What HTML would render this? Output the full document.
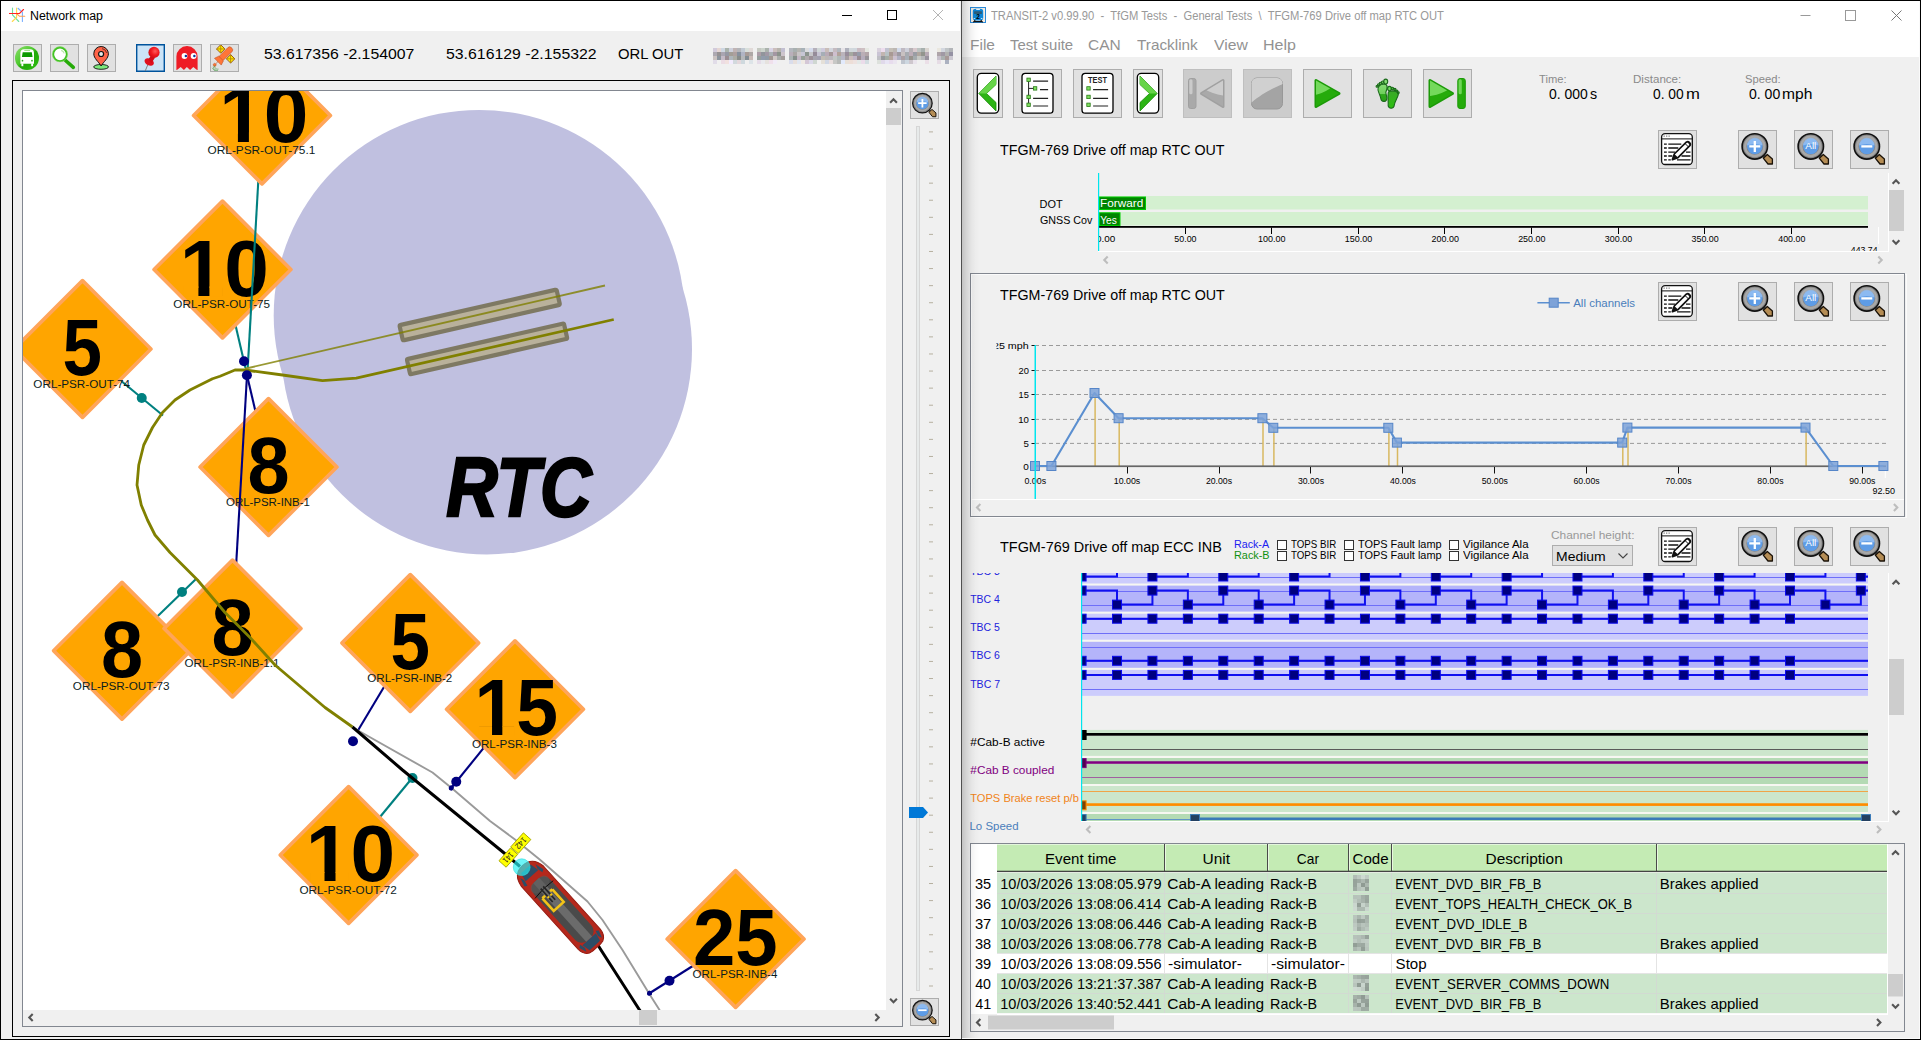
<!DOCTYPE html><html><head><meta charset="utf-8"><title>Network map / TRANSIT-2</title><style>
html,body{margin:0;padding:0}
body{width:1921px;height:1040px;overflow:hidden;background:#f0f0f0;font-family:"Liberation Sans",sans-serif;position:relative}
.abs{position:absolute}
.t{position:absolute;white-space:pre;line-height:0;transform-origin:0 0}
.btn{position:absolute;background:#e1e1e1;border:1px solid #adadad;box-sizing:content-box;overflow:hidden}
.btn.sel{background:#cce4f7;border:1px solid #00539c;box-shadow:inset 0 0 0 0.4px #00539c}
.btn.dis{background:#cccccc;border-color:#bfbfbf}
.btn svg{position:absolute;left:0;top:0}
.box{position:absolute;box-sizing:border-box}
</style></head><body><div id="netmap" class="abs" style="left:0;top:0;width:961px;height:1040px;background:#f0f0f0"><div class="abs" style="left:0;top:0;width:960px;height:31px;background:#fff"></div><svg class="abs" style="left:9px;top:7px" width="17" height="16" viewBox="0 0 17 16" fill="none" stroke-width="1.100" stroke-linecap="round"><path d="M3.500 1V8L9.750 14.500" stroke="#6fe0a0"/><path d="M7.600 1V10.500L3.250 14.500" stroke="#ffd84a"/><path d="M9 1.250L12.500 4.500M13.400 5V14.500" stroke="#7ab0ff"/><path d="M8 7L10.500 9.300H15.750" stroke="#ffa050"/><path d="M0.300 6.500H10.500L14.500 2.500" stroke="#ff2424"/></svg><span class="t" style="left:29.51px;top:15.84px;font-size:12px;color:#000;transform:scaleX(1.0326);">Network map</span><svg class="abs" style="left:830px;top:0" width="130" height="31"><line x1="12" y1="15.500" x2="22" y2="15.500" stroke="#000"/><rect x="57.500" y="10.500" width="9" height="9" fill="none" stroke="#000"/><path d="M103 10l10 10M113 10l-10 10" stroke="#b4b4b4" stroke-width="1"/></svg><div class="btn" style="left:13px;top:44px;width:27px;height:26px"><svg width="27" height="26" viewBox="0 0 27 26"><defs><linearGradient id="gb" x1="0" y1="0" x2="1" y2="1"><stop offset="0" stop-color="#8fe070"/><stop offset="0.45" stop-color="#4cc82c"/><stop offset="0.55" stop-color="#22a80a"/><stop offset="1" stop-color="#2fc010"/></linearGradient></defs><circle cx="13" cy="13" r="12" fill="url(#gb)"/><path d="M6.4 8.3Q6.4 4.3 10 4.3H16.4Q20 4.3 20 8.3V18.8H6.4Z" fill="#fff"/><rect x="7.4" y="18.4" width="1.9" height="2.8" fill="#fff"/><rect x="17.2" y="18.4" width="1.9" height="2.8" fill="#fff"/><path d="M8.7 7.2H17.8L18.6 12H7.9Z" fill="#0a9a00"/><rect x="10.3" y="5.2" width="5.8" height="0.7" fill="#7ad860"/><circle cx="8.5" cy="15.7" r="0.85" fill="#2aa818"/><circle cx="18" cy="15.7" r="0.85" fill="#2aa818"/></svg></div><div class="btn" style="left:50px;top:44px;width:27px;height:26px"><svg width="27" height="26" viewBox="0 0 27 26"><line x1="14" y1="15" x2="22.3" y2="22.3" stroke="#25aa08" stroke-width="3.6" stroke-linecap="round"/><circle cx="9" cy="9.3" r="6.8" fill="#fff" stroke="#3fc020" stroke-width="1.9"/><circle cx="9" cy="9.3" r="7.6" fill="none" stroke="#8fe070" stroke-width="0.5"/><path d="M10.2 5.4a4.300 4.300 0 0 1 3 3" stroke="#b8e8a8" stroke-width="1.1" fill="none"/></svg></div><div class="btn" style="left:87px;top:44px;width:27px;height:26px"><svg width="27" height="26" viewBox="0 0 27 26"><ellipse cx="13.1" cy="21.9" rx="7.4" ry="2.4" fill="#7be87b" stroke="#111" stroke-width="0.9"/><path d="M13.1 21C10.5 16.5 5.8 13.5 5.8 8.800A7.300 7.300 0 0 1 20.4 8.800C20.4 13.5 15.700 16.5 13.1 21Z" fill="#ff6347" stroke="#111" stroke-width="1"/><circle cx="13.1" cy="9" r="2.500" fill="#e8e8e8" stroke="#111" stroke-width="1.200"/><path d="M14 3.600a5.500 5.500 0 0 1 4.600 4.400" stroke="#111" stroke-width="0.600" fill="none"/></svg></div><div class="btn sel" style="left:136px;top:44px;width:27px;height:26px"><svg width="27" height="26" viewBox="0 0 27 26"><defs><radialGradient id="rp" cx="0.6" cy="0.4" r="0.7"><stop offset="0" stop-color="#ff5a5a"/><stop offset="0.500" stop-color="#f01820"/><stop offset="1" stop-color="#c80a14"/></radialGradient></defs><line x1="10.700" y1="20" x2="8.200" y2="26" stroke="#777" stroke-width="0.900"/><ellipse cx="12.200" cy="17" rx="5" ry="3.300" transform="rotate(28 12.200 17)" fill="#e01020"/><path d="M11 14.500L14.300 10.500L18 12.800L14.500 18Z" fill="#d40c1a"/><circle cx="17" cy="7.400" r="5.600" fill="url(#rp)"/></svg></div><div class="btn" style="left:173px;top:44px;width:27px;height:26px"><svg width="27" height="26" viewBox="0 0 27 26"><path d="M2.400 25V11.500A10.600 10.400 0 0 1 23.600 11.500V25L23.050 25L19.300 22.100L16.100 25L12.850 22.100L9.900 25L6.700 22.100L2.900 25Z" fill="#ee1c25"/><ellipse cx="10.500" cy="10.900" rx="2.900" ry="3" fill="#fff"/><ellipse cx="19.600" cy="10.900" rx="2.900" ry="3" fill="#fff"/><circle cx="11.900" cy="10.900" r="1.250" fill="#0a3a9a"/><circle cx="20.400" cy="10.900" r="1.250" fill="#0a3a9a"/></svg></div><div class="btn" style="left:210px;top:44px;width:27px;height:26px"><svg width="27" height="26" viewBox="0 0 27 26"><g transform="translate(14.300 9.250) rotate(-45)"><rect x="-8" y="-2.900" width="17" height="5.800" rx="2.400" fill="#ff7538" stroke="#b84818" stroke-width="0.500"/><path d="M-6 -3.300L-10.500 -4.800V4.800L-6 3.300Z" fill="#ff7538" stroke="#b84818" stroke-width="0.500"/><line x1="-10.500" y1="0" x2="-14" y2="0" stroke="#b84818" stroke-width="0.800" stroke-dasharray="1 0.700"/><circle cx="-15" cy="0" r="1.500" fill="#ff7538" stroke="#b84818" stroke-width="0.400"/><rect x="-2.500" y="-10" width="6" height="6" fill="#ffee00" stroke="#7a2a10" stroke-width="0.700"/><rect x="-2.500" y="4" width="6" height="6" fill="#ffee00" stroke="#7a2a10" stroke-width="0.700"/><path d="M-2.500 -10l6 6M3.500 -10l-6 6M-2.500 4l6 6M3.500 4l-6 6" stroke="#b88a00" stroke-width="0.900"/></g><path d="M2.300 21.500a4.500 4.500 0 0 0 4.700 4M3.600 20.300a3.200 3.200 0 0 0 4 3.800M1.200 22.800a6 6 0 0 0 4.500 3.500" stroke="#4a9a4a" stroke-width="0.600" fill="none"/></svg></div><span class="t" style="left:264.12px;top:53.70px;font-size:15.3px;color:#000;transform:scaleX(1.0338);">53.617356 -2.154007</span><span class="t" style="left:446.37px;top:53.70px;font-size:15.3px;color:#000;transform:scaleX(1.0356);">53.616129 -2.155322</span><span class="t" style="left:617.83px;top:53.70px;font-size:15.3px;color:#000;transform:scaleX(0.9676);">ORL OUT</span><svg class="abs" style="left:0;top:0" width="960" height="80"><rect x="713" y="48" width="4" height="4" fill="rgb(210,203,219)"/><rect x="713" y="52" width="4" height="4" fill="rgb(173,169,177)"/><rect x="713" y="56" width="4" height="4" fill="rgb(202,194,192)"/><rect x="713" y="60" width="4" height="4" fill="rgb(225,220,232)"/><rect x="717" y="48" width="4" height="4" fill="rgb(229,214,211)"/><rect x="717" y="52" width="4" height="4" fill="rgb(150,146,147)"/><rect x="717" y="56" width="4" height="4" fill="rgb(141,149,158)"/><rect x="721" y="48" width="4" height="4" fill="rgb(206,215,226)"/><rect x="721" y="52" width="4" height="4" fill="rgb(169,165,177)"/><rect x="721" y="56" width="4" height="4" fill="rgb(196,187,199)"/><rect x="721" y="60" width="4" height="4" fill="rgb(236,220,228)"/><rect x="725" y="48" width="4" height="4" fill="rgb(170,179,172)"/><rect x="725" y="52" width="4" height="4" fill="rgb(149,152,163)"/><rect x="725" y="56" width="4" height="4" fill="rgb(155,141,147)"/><rect x="725" y="60" width="4" height="4" fill="rgb(241,225,223)"/><rect x="729" y="48" width="4" height="4" fill="rgb(205,208,220)"/><rect x="729" y="52" width="4" height="4" fill="rgb(163,158,150)"/><rect x="729" y="56" width="4" height="4" fill="rgb(174,182,188)"/><rect x="729" y="60" width="4" height="4" fill="rgb(242,235,253)"/><rect x="733" y="48" width="4" height="4" fill="rgb(192,180,180)"/><rect x="733" y="52" width="4" height="4" fill="rgb(174,160,159)"/><rect x="733" y="56" width="4" height="4" fill="rgb(171,172,164)"/><rect x="733" y="60" width="4" height="4" fill="rgb(210,217,221)"/><rect x="737" y="48" width="4" height="4" fill="rgb(180,181,185)"/><rect x="737" y="52" width="4" height="4" fill="rgb(134,144,157)"/><rect x="737" y="56" width="4" height="4" fill="rgb(136,140,138)"/><rect x="737" y="60" width="4" height="4" fill="rgb(228,216,220)"/><rect x="741" y="48" width="4" height="4" fill="rgb(193,201,211)"/><rect x="741" y="52" width="4" height="4" fill="rgb(176,180,196)"/><rect x="741" y="56" width="4" height="4" fill="rgb(181,183,185)"/><rect x="741" y="60" width="4" height="4" fill="rgb(207,217,222)"/><rect x="745" y="48" width="4" height="4" fill="rgb(216,223,219)"/><rect x="745" y="52" width="4" height="4" fill="rgb(167,155,150)"/><rect x="745" y="56" width="4" height="4" fill="rgb(131,140,146)"/><rect x="749" y="48" width="4" height="4" fill="rgb(225,218,216)"/><rect x="749" y="52" width="4" height="4" fill="rgb(174,168,166)"/><rect x="749" y="56" width="4" height="4" fill="rgb(200,186,182)"/><rect x="749" y="60" width="4" height="4" fill="rgb(221,228,232)"/><rect x="757" y="48" width="4" height="4" fill="rgb(197,201,193)"/><rect x="757" y="52" width="4" height="4" fill="rgb(172,157,167)"/><rect x="757" y="56" width="4" height="4" fill="rgb(149,159,157)"/><rect x="757" y="60" width="4" height="4" fill="rgb(229,220,232)"/><rect x="761" y="48" width="4" height="4" fill="rgb(204,211,204)"/><rect x="761" y="52" width="4" height="4" fill="rgb(145,149,155)"/><rect x="761" y="56" width="4" height="4" fill="rgb(146,156,172)"/><rect x="761" y="60" width="4" height="4" fill="rgb(233,234,238)"/><rect x="765" y="48" width="4" height="4" fill="rgb(171,179,173)"/><rect x="765" y="52" width="4" height="4" fill="rgb(161,153,165)"/><rect x="765" y="56" width="4" height="4" fill="rgb(145,155,166)"/><rect x="765" y="60" width="4" height="4" fill="rgb(230,226,222)"/><rect x="769" y="48" width="4" height="4" fill="rgb(217,212,230)"/><rect x="769" y="52" width="4" height="4" fill="rgb(170,176,180)"/><rect x="769" y="56" width="4" height="4" fill="rgb(161,151,147)"/><rect x="769" y="60" width="4" height="4" fill="rgb(240,224,235)"/><rect x="773" y="48" width="4" height="4" fill="rgb(203,190,188)"/><rect x="773" y="52" width="4" height="4" fill="rgb(163,150,162)"/><rect x="773" y="56" width="4" height="4" fill="rgb(207,200,198)"/><rect x="773" y="60" width="4" height="4" fill="rgb(241,236,247)"/><rect x="777" y="48" width="4" height="4" fill="rgb(183,180,173)"/><rect x="777" y="52" width="4" height="4" fill="rgb(139,146,139)"/><rect x="777" y="56" width="4" height="4" fill="rgb(170,172,171)"/><rect x="781" y="48" width="4" height="4" fill="rgb(194,191,209)"/><rect x="781" y="52" width="4" height="4" fill="rgb(206,197,204)"/><rect x="781" y="56" width="4" height="4" fill="rgb(164,158,155)"/><rect x="789" y="48" width="4" height="4" fill="rgb(180,183,190)"/><rect x="789" y="52" width="4" height="4" fill="rgb(185,175,186)"/><rect x="789" y="56" width="4" height="4" fill="rgb(171,179,179)"/><rect x="789" y="60" width="4" height="4" fill="rgb(217,221,236)"/><rect x="793" y="48" width="4" height="4" fill="rgb(168,176,176)"/><rect x="793" y="52" width="4" height="4" fill="rgb(170,166,165)"/><rect x="793" y="56" width="4" height="4" fill="rgb(134,143,140)"/><rect x="793" y="60" width="4" height="4" fill="rgb(232,224,220)"/><rect x="797" y="48" width="4" height="4" fill="rgb(181,180,176)"/><rect x="797" y="52" width="4" height="4" fill="rgb(201,197,199)"/><rect x="797" y="56" width="4" height="4" fill="rgb(195,182,196)"/><rect x="797" y="60" width="4" height="4" fill="rgb(225,231,241)"/><rect x="801" y="48" width="4" height="4" fill="rgb(167,177,184)"/><rect x="801" y="52" width="4" height="4" fill="rgb(199,198,212)"/><rect x="801" y="56" width="4" height="4" fill="rgb(150,159,151)"/><rect x="801" y="60" width="4" height="4" fill="rgb(239,234,228)"/><rect x="805" y="48" width="4" height="4" fill="rgb(220,221,223)"/><rect x="805" y="52" width="4" height="4" fill="rgb(140,148,142)"/><rect x="805" y="56" width="4" height="4" fill="rgb(175,168,171)"/><rect x="805" y="60" width="4" height="4" fill="rgb(212,199,214)"/><rect x="809" y="48" width="4" height="4" fill="rgb(214,220,237)"/><rect x="809" y="52" width="4" height="4" fill="rgb(198,198,201)"/><rect x="809" y="56" width="4" height="4" fill="rgb(156,145,152)"/><rect x="809" y="60" width="4" height="4" fill="rgb(220,217,234)"/><rect x="813" y="48" width="4" height="4" fill="rgb(181,176,186)"/><rect x="813" y="52" width="4" height="4" fill="rgb(149,140,153)"/><rect x="813" y="56" width="4" height="4" fill="rgb(166,164,174)"/><rect x="813" y="60" width="4" height="4" fill="rgb(207,215,209)"/><rect x="817" y="48" width="4" height="4" fill="rgb(208,215,215)"/><rect x="817" y="52" width="4" height="4" fill="rgb(199,196,211)"/><rect x="817" y="56" width="4" height="4" fill="rgb(163,161,176)"/><rect x="821" y="48" width="4" height="4" fill="rgb(207,203,221)"/><rect x="821" y="52" width="4" height="4" fill="rgb(166,174,182)"/><rect x="821" y="56" width="4" height="4" fill="rgb(194,188,180)"/><rect x="821" y="60" width="4" height="4" fill="rgb(229,224,216)"/><rect x="825" y="48" width="4" height="4" fill="rgb(201,189,184)"/><rect x="825" y="52" width="4" height="4" fill="rgb(185,171,182)"/><rect x="825" y="56" width="4" height="4" fill="rgb(187,182,182)"/><rect x="825" y="60" width="4" height="4" fill="rgb(209,215,228)"/><rect x="829" y="48" width="4" height="4" fill="rgb(210,214,222)"/><rect x="829" y="52" width="4" height="4" fill="rgb(164,150,152)"/><rect x="829" y="56" width="4" height="4" fill="rgb(186,182,189)"/><rect x="829" y="60" width="4" height="4" fill="rgb(233,222,222)"/><rect x="833" y="48" width="4" height="4" fill="rgb(197,187,192)"/><rect x="833" y="52" width="4" height="4" fill="rgb(206,191,207)"/><rect x="833" y="56" width="4" height="4" fill="rgb(194,198,196)"/><rect x="833" y="60" width="4" height="4" fill="rgb(199,199,197)"/><rect x="837" y="48" width="4" height="4" fill="rgb(177,183,190)"/><rect x="837" y="52" width="4" height="4" fill="rgb(178,162,155)"/><rect x="837" y="56" width="4" height="4" fill="rgb(177,185,185)"/><rect x="837" y="60" width="4" height="4" fill="rgb(183,185,183)"/><rect x="841" y="48" width="4" height="4" fill="rgb(231,228,232)"/><rect x="841" y="52" width="4" height="4" fill="rgb(186,180,187)"/><rect x="841" y="56" width="4" height="4" fill="rgb(183,183,197)"/><rect x="841" y="60" width="4" height="4" fill="rgb(226,234,252)"/><rect x="845" y="48" width="4" height="4" fill="rgb(175,177,188)"/><rect x="845" y="52" width="4" height="4" fill="rgb(153,142,156)"/><rect x="845" y="56" width="4" height="4" fill="rgb(165,157,160)"/><rect x="845" y="60" width="4" height="4" fill="rgb(232,224,216)"/><rect x="849" y="48" width="4" height="4" fill="rgb(210,216,220)"/><rect x="849" y="52" width="4" height="4" fill="rgb(165,169,161)"/><rect x="849" y="56" width="4" height="4" fill="rgb(205,189,189)"/><rect x="849" y="60" width="4" height="4" fill="rgb(237,222,215)"/><rect x="853" y="48" width="4" height="4" fill="rgb(208,215,221)"/><rect x="853" y="52" width="4" height="4" fill="rgb(156,146,155)"/><rect x="853" y="56" width="4" height="4" fill="rgb(191,181,198)"/><rect x="853" y="60" width="4" height="4" fill="rgb(237,226,224)"/><rect x="857" y="48" width="4" height="4" fill="rgb(203,187,194)"/><rect x="857" y="52" width="4" height="4" fill="rgb(151,156,170)"/><rect x="857" y="56" width="4" height="4" fill="rgb(154,140,147)"/><rect x="857" y="60" width="4" height="4" fill="rgb(227,232,231)"/><rect x="861" y="48" width="4" height="4" fill="rgb(206,192,195)"/><rect x="861" y="52" width="4" height="4" fill="rgb(186,174,182)"/><rect x="861" y="56" width="4" height="4" fill="rgb(181,172,188)"/><rect x="861" y="60" width="4" height="4" fill="rgb(235,220,234)"/><rect x="865" y="48" width="4" height="4" fill="rgb(229,232,226)"/><rect x="865" y="52" width="4" height="4" fill="rgb(179,166,170)"/><rect x="865" y="56" width="4" height="4" fill="rgb(152,148,154)"/><rect x="865" y="60" width="4" height="4" fill="rgb(211,221,225)"/><rect x="877" y="48" width="4" height="4" fill="rgb(218,210,222)"/><rect x="877" y="52" width="4" height="4" fill="rgb(202,196,213)"/><rect x="877" y="56" width="4" height="4" fill="rgb(192,192,198)"/><rect x="877" y="60" width="4" height="4" fill="rgb(221,225,220)"/><rect x="881" y="48" width="4" height="4" fill="rgb(237,221,238)"/><rect x="881" y="52" width="4" height="4" fill="rgb(193,181,176)"/><rect x="881" y="56" width="4" height="4" fill="rgb(150,153,157)"/><rect x="881" y="60" width="4" height="4" fill="rgb(224,217,234)"/><rect x="885" y="48" width="4" height="4" fill="rgb(193,195,209)"/><rect x="885" y="52" width="4" height="4" fill="rgb(184,194,197)"/><rect x="885" y="56" width="4" height="4" fill="rgb(164,172,165)"/><rect x="885" y="60" width="4" height="4" fill="rgb(232,229,245)"/><rect x="889" y="48" width="4" height="4" fill="rgb(197,192,184)"/><rect x="889" y="52" width="4" height="4" fill="rgb(168,153,147)"/><rect x="889" y="56" width="4" height="4" fill="rgb(182,167,160)"/><rect x="889" y="60" width="4" height="4" fill="rgb(231,220,237)"/><rect x="893" y="48" width="4" height="4" fill="rgb(188,183,179)"/><rect x="893" y="52" width="4" height="4" fill="rgb(186,173,181)"/><rect x="893" y="56" width="4" height="4" fill="rgb(204,193,207)"/><rect x="893" y="60" width="4" height="4" fill="rgb(234,229,239)"/><rect x="897" y="48" width="4" height="4" fill="rgb(211,219,235)"/><rect x="897" y="52" width="4" height="4" fill="rgb(158,154,162)"/><rect x="897" y="56" width="4" height="4" fill="rgb(174,175,193)"/><rect x="901" y="48" width="4" height="4" fill="rgb(191,185,193)"/><rect x="901" y="52" width="4" height="4" fill="rgb(200,193,193)"/><rect x="901" y="56" width="4" height="4" fill="rgb(170,159,163)"/><rect x="901" y="60" width="4" height="4" fill="rgb(191,197,206)"/><rect x="905" y="48" width="4" height="4" fill="rgb(206,208,218)"/><rect x="905" y="52" width="4" height="4" fill="rgb(167,171,176)"/><rect x="905" y="56" width="4" height="4" fill="rgb(167,174,182)"/><rect x="905" y="60" width="4" height="4" fill="rgb(205,215,224)"/><rect x="909" y="48" width="4" height="4" fill="rgb(183,177,181)"/><rect x="909" y="52" width="4" height="4" fill="rgb(189,174,184)"/><rect x="909" y="56" width="4" height="4" fill="rgb(152,147,141)"/><rect x="909" y="60" width="4" height="4" fill="rgb(206,199,205)"/><rect x="913" y="48" width="4" height="4" fill="rgb(216,201,205)"/><rect x="913" y="52" width="4" height="4" fill="rgb(154,157,164)"/><rect x="913" y="56" width="4" height="4" fill="rgb(165,171,173)"/><rect x="913" y="60" width="4" height="4" fill="rgb(233,228,236)"/><rect x="917" y="48" width="4" height="4" fill="rgb(188,195,193)"/><rect x="917" y="52" width="4" height="4" fill="rgb(175,166,158)"/><rect x="917" y="56" width="4" height="4" fill="rgb(197,199,195)"/><rect x="921" y="48" width="4" height="4" fill="rgb(167,176,174)"/><rect x="921" y="52" width="4" height="4" fill="rgb(146,149,141)"/><rect x="921" y="56" width="4" height="4" fill="rgb(182,183,185)"/><rect x="925" y="48" width="4" height="4" fill="rgb(219,214,209)"/><rect x="925" y="52" width="4" height="4" fill="rgb(184,171,181)"/><rect x="925" y="56" width="4" height="4" fill="rgb(153,147,158)"/><rect x="925" y="60" width="4" height="4" fill="rgb(235,223,231)"/><rect x="937" y="48" width="4" height="4" fill="rgb(234,231,223)"/><rect x="937" y="52" width="4" height="4" fill="rgb(174,164,169)"/><rect x="937" y="56" width="4" height="4" fill="rgb(198,192,203)"/><rect x="937" y="60" width="4" height="4" fill="rgb(230,220,229)"/><rect x="941" y="48" width="4" height="4" fill="rgb(211,215,223)"/><rect x="941" y="52" width="4" height="4" fill="rgb(160,153,164)"/><rect x="941" y="56" width="4" height="4" fill="rgb(171,177,176)"/><rect x="945" y="48" width="4" height="4" fill="rgb(192,197,199)"/><rect x="945" y="52" width="4" height="4" fill="rgb(178,178,176)"/><rect x="945" y="56" width="4" height="4" fill="rgb(167,153,151)"/><rect x="945" y="60" width="4" height="4" fill="rgb(171,177,192)"/><rect x="949" y="48" width="4" height="4" fill="rgb(178,180,184)"/><rect x="949" y="52" width="4" height="4" fill="rgb(149,146,164)"/><rect x="949" y="56" width="4" height="4" fill="rgb(203,200,209)"/></svg><div class="box" style="left:12px;top:80px;width:938px;height:957px;border:1px solid #000"></div><div class="box" style="left:22px;top:90px;width:881px;height:937px;border:1px solid #828790;background:#f0f0f0"></div><svg class="abs" style="left:23px;top:91px" width="863" height="919" viewBox="23 91 863 919"><rect x="23" y="91" width="863" height="919" fill="#fff"/><circle cx="479.1" cy="315.3" r="205.4" fill="#c0c0e0"/><circle cx="486.7" cy="349.1" r="205.3" fill="#c0c0e0"/><rect x="-80.55" y="-7.80" width="161.10" height="15.60" rx="1.5" transform="translate(479.70,315.00) rotate(-12.8)" fill="#b9b19b" stroke="#7e7963" stroke-width="4.2" stroke-linejoin="round"/><rect x="-80.55" y="-7.80" width="161.10" height="15.60" rx="1.5" transform="translate(487.06,348.94) rotate(-12.8)" fill="#b9b19b" stroke="#7e7963" stroke-width="4.2" stroke-linejoin="round"/><line x1="82.5" y1="349" x2="163" y2="415.5" stroke="#008080" stroke-width="2.1"/><circle cx="141.75" cy="398" r="5" fill="#008080"/><path d="M82.5 280.6L150.9 349L82.5 417.4L14.099999999999994 349Z" fill="#ffa500" stroke="#ffa55a" stroke-width="3.7" stroke-linejoin="round"/><text transform="translate(62.62,375.00) scale(0.8987,1)" font-size="79" fill="#000" font-weight="bold" >5</text><text x="33.35" y="387.80" font-size="11.7" fill="#0c1c1c" >ORL-PSR-OUT-74</text><line x1="222.5" y1="269.5" x2="245.5" y2="368" stroke="#008080" stroke-width="2.1"/><path d="M222.5 201.1L290.9 269.5L222.5 337.9L154.1 269.5Z" fill="#ffa500" stroke="#ffa55a" stroke-width="3.7" stroke-linejoin="round"/><text transform="translate(179.69,295.50) scale(1.0152,1)" font-size="79" fill="#000" font-weight="bold" >10</text><path d="M183.94 286.44H198.41V296.30H183.94ZM209.41 286.44H222.86V296.30H209.41Z" fill="#ffa500"/><text x="173.35" y="308.30" font-size="11.7" fill="#0c1c1c" >ORL-PSR-OUT-75</text><line x1="262" y1="115.5" x2="247.75" y2="367.5" stroke="#008080" stroke-width="2.1"/><path d="M262 47.099999999999994L330.4 115.5L262 183.9L193.6 115.5Z" fill="#ffa500" stroke="#ffa55a" stroke-width="3.7" stroke-linejoin="round"/><text transform="translate(219.19,141.50) scale(1.0152,1)" font-size="79" fill="#000" font-weight="bold" >10</text><path d="M223.44 132.44H237.91V142.30H223.44ZM248.91 132.44H262.36V142.30H248.91Z" fill="#ffa500"/><text transform="translate(207.59,154.30) scale(1.0115,1)" font-size="11.7" fill="#0c1c1c" >ORL-PSR-OUT-75.1</text><line x1="268.5" y1="467" x2="247" y2="375.25" stroke="#000080" stroke-width="2.1"/><path d="M268.5 398.6L336.9 467L268.5 535.4L200.1 467Z" fill="#ffa500" stroke="#ffa55a" stroke-width="3.7" stroke-linejoin="round"/><text transform="translate(247.48,493.00) scale(0.9590,1)" font-size="79" fill="#000" font-weight="bold" >8</text><text transform="translate(225.98,505.80) scale(0.9792,1)" font-size="11.7" fill="#0c1c1c" >ORL-PSR-INB-1</text><line x1="122" y1="650.75" x2="196.25" y2="578.75" stroke="#008080" stroke-width="2.1"/><circle cx="182" cy="592" r="5" fill="#008080"/><path d="M122 582.35L190.4 650.75L122 719.15L53.599999999999994 650.75Z" fill="#ffa500" stroke="#ffa55a" stroke-width="3.7" stroke-linejoin="round"/><text transform="translate(100.98,676.75) scale(0.9590,1)" font-size="79" fill="#000" font-weight="bold" >8</text><text x="72.85" y="689.55" font-size="11.7" fill="#0c1c1c" >ORL-PSR-OUT-73</text><line x1="232.5" y1="628.5" x2="247" y2="375.25" stroke="#000080" stroke-width="2.1"/><path d="M232.5 560.1L300.9 628.5L232.5 696.9L164.1 628.5Z" fill="#ffa500" stroke="#ffa55a" stroke-width="3.7" stroke-linejoin="round"/><text transform="translate(211.48,654.50) scale(0.9590,1)" font-size="79" fill="#000" font-weight="bold" >8</text><text transform="translate(184.48,667.30) scale(0.9943,1)" font-size="11.7" fill="#0c1c1c" >ORL-PSR-INB-1.1</text><line x1="410.3" y1="643" x2="357.5" y2="731.25" stroke="#000080" stroke-width="2.1"/><circle cx="353" cy="741.25" r="5" fill="#000080"/><path d="M410.3 574.6L478.70000000000005 643L410.3 711.4L341.9 643Z" fill="#ffa500" stroke="#ffa55a" stroke-width="3.7" stroke-linejoin="round"/><text transform="translate(390.42,669.00) scale(0.8987,1)" font-size="79" fill="#000" font-weight="bold" >5</text><text transform="translate(367.28,681.80) scale(0.9916,1)" font-size="11.7" fill="#0c1c1c" >ORL-PSR-INB-2</text><line x1="515" y1="709.25" x2="451.25" y2="788" stroke="#000080" stroke-width="2.1"/><circle cx="456.25" cy="781.75" r="5" fill="#000080"/><circle cx="451.25" cy="788" r="2.5" fill="#000080"/><path d="M515 640.85L583.4 709.25L515 777.65L446.6 709.25Z" fill="#ffa500" stroke="#ffa55a" stroke-width="3.7" stroke-linejoin="round"/><text transform="translate(474.49,735.25) scale(0.9509,1)" font-size="79" fill="#000" font-weight="bold" >15</text><path d="M478.42 726.19H492.03V736.05H478.42ZM502.33 726.19H514.98V736.05H502.33Z" fill="#ffa500"/><text transform="translate(471.98,748.05) scale(0.9903,1)" font-size="11.7" fill="#0c1c1c" >ORL-PSR-INB-3</text><line x1="348.6" y1="855" x2="413" y2="777" stroke="#008080" stroke-width="2.1"/><circle cx="412.5" cy="778" r="5" fill="#008080"/><path d="M348.6 786.6L417.0 855L348.6 923.4L280.20000000000005 855Z" fill="#ffa500" stroke="#ffa55a" stroke-width="3.7" stroke-linejoin="round"/><text transform="translate(305.79,881.00) scale(1.0152,1)" font-size="79" fill="#000" font-weight="bold" >10</text><path d="M310.04 871.94H324.51V881.80H310.04ZM335.51 871.94H348.96V881.80H335.51Z" fill="#ffa500"/><text transform="translate(299.45,893.80) scale(1.0051,1)" font-size="11.7" fill="#0c1c1c" >ORL-PSR-OUT-72</text><line x1="735.6" y1="939" x2="649.5" y2="993.25" stroke="#000080" stroke-width="2.1"/><circle cx="669.5" cy="980.75" r="5" fill="#000080"/><circle cx="649.5" cy="993.25" r="2.5" fill="#000080"/><path d="M735.6 870.6L804.0 939L735.6 1007.4L667.2 939Z" fill="#ffa500" stroke="#ffa55a" stroke-width="3.7" stroke-linejoin="round"/><text transform="translate(692.93,965.00) scale(0.9644,1)" font-size="79" fill="#000" font-weight="bold" >25</text><text transform="translate(692.58,977.80) scale(0.9889,1)" font-size="11.7" fill="#0c1c1c" >ORL-PSR-INB-4</text><polyline points="355.00,728.75 432.50,772.50 452.50,788.75 490.00,821.00 515.00,839.50 540.00,859.80 562.50,879.50 587.50,901.50 602.50,920.00 622.50,950.00 650.00,995.00 658.75,1008.75 665.00,1019.00" fill="none" stroke="#9a9a9a" stroke-width="1.9" stroke-linejoin="round" /><line x1="245" y1="368.75" x2="605" y2="285.5" stroke="#808000" stroke-opacity="0.8" stroke-width="1.8"/><polyline points="613.75,319.50 356.25,378.10 322.50,380.60 282.50,375.00 245.00,370.00 235.00,370.00 220.00,376.25 212.50,378.75 190.00,390.00 175.00,400.00 162.50,412.50 152.50,427.50 143.75,445.00 138.75,465.00 137.00,485.00 141.25,505.00 147.50,520.00 155.00,535.00 170.00,552.50 197.50,580.00 225.00,612.50 250.00,637.50 275.00,665.00 325.00,707.50 352.50,727.00" fill="none" stroke="#808000" stroke-width="2.8" stroke-linejoin="round" /><polyline points="352.50,727.00 402.50,770.00 505.00,853.75 520.00,866.50" fill="none" stroke="#000" stroke-width="3" stroke-linejoin="round" /><polyline points="596.00,942.00 601.00,950.00 638.75,1008.75 645.00,1018.00" fill="none" stroke="#000" stroke-width="3" stroke-linejoin="round" /><circle cx="244" cy="361.25" r="5" fill="#000080"/><circle cx="246.9" cy="375.25" r="5" fill="#000080"/><circle cx="451.25" cy="788" r="2.4" fill="#000080"/><circle cx="649.5" cy="993.25" r="2.4" fill="#000080"/><text transform="translate(446.17,516.30) scale(0.8563,1)" font-size="83.3" fill="#000" font-weight="bold" font-style="italic" stroke="#000" stroke-width="2.6" stroke-linejoin="miter">RTC</text><g transform="translate(508.3,857.6) rotate(132)"><rect x="-8.6" y="-4.8" width="17.2" height="9.6" fill="#ffff00" stroke="#a8a800" stroke-width="0.900"/><text x="0" y="2.900" font-size="8.200" text-anchor="middle" fill="#222" textLength="11.5" lengthAdjust="spacingAndGlyphs">141</text></g><g transform="translate(520.8,843.2) rotate(132)"><rect x="-9.45" y="-5.0" width="18.9" height="10" fill="#ffff00" stroke="#a8a800" stroke-width="0.900"/><text x="0" y="2.900" font-size="8.200" text-anchor="middle" fill="#222" textLength="13" lengthAdjust="spacingAndGlyphs">142</text></g><g transform="translate(559.7,906.5) rotate(48)"><path d="M-41 -15 H44 Q52 -14.5 54.5 -9 L55.3 -5 V5 L54.5 9 Q52 14.5 44 15 H-41 Q-55.3 13 -55.3 0 Q-55.3 -13 -41 -15Z" fill="#b5281c" stroke="#96190f" stroke-width="1"/><path d="M-50.5 -6.5 L-41.5 -8.5 V8.5 L-50.5 6.5Z" fill="#2d4d66"/><path d="M-47.5 -10.3 L-38.5 -12.8 L-37 -10 L-43 -8.800Z" fill="#2d4d66"/><path d="M-47.5 10.3 L-38.5 12.8 L-37 10 L-43 8.800Z" fill="#2d4d66"/><path d="M52.5 -7 L44 -9 V9 L52.5 7Z" fill="#2d4d66"/><path d="M51.5 -10.5 L44 -13 L42 -10.5 L47.5 -8.800Z" fill="#2d4d66"/><path d="M51.5 10.5 L44 13 L42 10.5 L47.5 8.800Z" fill="#2d4d66"/><rect x="-35" y="-11" width="79" height="22" rx="9" fill="#4a4a4a"/><rect x="-35" y="-4" width="79" height="8" fill="#6b6b6b"/><rect x="-35" y="-11" width="11" height="22" rx="6" fill="#5a5a5a" opacity="0.600"/><path d="M-23.5 -12.5 Q-25 0 -22.500 13" stroke="#0a0a0a" stroke-width="0.9" fill="none"/><path d="M-26 -1.200H-8M-26 2.200H-8" stroke="#262626" stroke-width="1.700"/><path d="M-12 -6 H-17.7 M-17.7 7.400 H-0.700 V-6 H-12 M-17.700 7.400 V3.600 M-17.700 -6 V-3" fill="none" stroke="#f3c318" stroke-width="2.600"/><path d="M-14.500 -2.800V-0.400M-14.500 1.200V3.400" stroke="#f3c318" stroke-width="2"/></g><circle cx="521.7" cy="867.2" r="8.400" fill="#28f0f4" fill-opacity="0.680" stroke="#30dede" stroke-width="0.600"/></svg><svg class="abs" style="left:23px;top:91px" width="879" height="935"><rect x="863" y="0" width="16" height="919" fill="#f0f0f0"/><rect x="0" y="919" width="879" height="16" fill="#f0f0f0"/><rect x="863" y="17" width="15" height="17" fill="#cdcdcd"/><rect x="616" y="919" width="18" height="15" fill="#cdcdcd"/><polyline points="867.10,11.70 870.50,8.30 873.90,11.70" fill="none" stroke="#555" stroke-width="2.1"/><polyline points="867.10,907.80 870.50,911.20 873.90,907.80" fill="none" stroke="#555" stroke-width="2.1"/><polyline points="9.70,923.10 6.30,926.50 9.70,929.90" fill="none" stroke="#555" stroke-width="2.1"/><polyline points="852.30,923.10 855.70,926.50 852.30,929.90" fill="none" stroke="#555" stroke-width="2.1"/></svg><div class="btn" style="left:910px;top:91px;width:27px;height:26px"><svg width="27" height="26" viewBox="0 0 27 26"><g transform="translate(-0.750 -0.640) scale(0.769)"><path d="M22 22l4.500 4.500" stroke="#777" stroke-width="3.400"/><path d="M24.300 27.200L28.300 23.500L33.400 28V33H29Z" fill="#b58d55" stroke="#1a1208" stroke-width="1.300" stroke-linejoin="round"/><circle cx="15.800" cy="15.400" r="12.700" fill="#858585" stroke="#111" stroke-width="1.600"/><circle cx="15.800" cy="15.400" r="9.600" fill="none" stroke="#a8a8a8" stroke-width="2.400"/><circle cx="15.800" cy="15.400" r="7.800" fill="#5e9ce6"/><path d="M8 14.500a7.800 7.800 0 0 1 15.600 0q-7.800 -3 -15.600 0z" fill="#9cc4f4" opacity="0.750"/><path d="M10.3 15.4h11M15.8 9.900v11" stroke="#fff" stroke-width="2.300"/></g></svg></div><div class="btn" style="left:910px;top:998px;width:27px;height:26px"><svg width="27" height="26" viewBox="0 0 27 26"><g transform="translate(-0.750 -0.640) scale(0.769)"><path d="M22 22l4.500 4.500" stroke="#777" stroke-width="3.400"/><path d="M24.300 27.200L28.300 23.500L33.400 28V33H29Z" fill="#b58d55" stroke="#1a1208" stroke-width="1.300" stroke-linejoin="round"/><circle cx="15.800" cy="15.400" r="12.700" fill="#858585" stroke="#111" stroke-width="1.600"/><circle cx="15.800" cy="15.400" r="9.600" fill="none" stroke="#a8a8a8" stroke-width="2.400"/><circle cx="15.800" cy="15.400" r="7.800" fill="#5e9ce6"/><path d="M8 14.500a7.800 7.800 0 0 1 15.600 0q-7.800 -3 -15.600 0z" fill="#9cc4f4" opacity="0.750"/><path d="M10.300 15.400h11" stroke="#fff" stroke-width="2.300"/></g></svg></div><svg class="abs" style="left:905px;top:120px" width="40" height="876"><rect x="11.500" y="6.500" width="3" height="864" fill="#e7eaea" stroke="#d6d6d6"/><rect x="24" y="11.40" width="4" height="1" fill="#b6b0a0"/><rect x="24" y="28.48" width="4" height="1" fill="#b6b0a0"/><rect x="24" y="45.56" width="4" height="1" fill="#b6b0a0"/><rect x="24" y="62.65" width="4" height="1" fill="#b6b0a0"/><rect x="24" y="79.73" width="4" height="1" fill="#b6b0a0"/><rect x="24" y="96.81" width="4" height="1" fill="#b6b0a0"/><rect x="24" y="113.89" width="4" height="1" fill="#b6b0a0"/><rect x="24" y="130.97" width="4" height="1" fill="#b6b0a0"/><rect x="24" y="148.06" width="4" height="1" fill="#b6b0a0"/><rect x="24" y="165.14" width="4" height="1" fill="#b6b0a0"/><rect x="24" y="182.22" width="4" height="1" fill="#b6b0a0"/><rect x="24" y="199.30" width="4" height="1" fill="#b6b0a0"/><rect x="24" y="216.38" width="4" height="1" fill="#b6b0a0"/><rect x="24" y="233.47" width="4" height="1" fill="#b6b0a0"/><rect x="24" y="250.55" width="4" height="1" fill="#b6b0a0"/><rect x="24" y="267.63" width="4" height="1" fill="#b6b0a0"/><rect x="24" y="284.71" width="4" height="1" fill="#b6b0a0"/><rect x="24" y="301.79" width="4" height="1" fill="#b6b0a0"/><rect x="24" y="318.88" width="4" height="1" fill="#b6b0a0"/><rect x="24" y="335.96" width="4" height="1" fill="#b6b0a0"/><rect x="24" y="353.04" width="4" height="1" fill="#b6b0a0"/><rect x="24" y="370.12" width="4" height="1" fill="#b6b0a0"/><rect x="24" y="387.20" width="4" height="1" fill="#b6b0a0"/><rect x="24" y="404.29" width="4" height="1" fill="#b6b0a0"/><rect x="24" y="421.37" width="4" height="1" fill="#b6b0a0"/><rect x="24" y="438.45" width="4" height="1" fill="#b6b0a0"/><rect x="24" y="455.53" width="4" height="1" fill="#b6b0a0"/><rect x="24" y="472.61" width="4" height="1" fill="#b6b0a0"/><rect x="24" y="489.70" width="4" height="1" fill="#b6b0a0"/><rect x="24" y="506.78" width="4" height="1" fill="#b6b0a0"/><rect x="24" y="523.86" width="4" height="1" fill="#b6b0a0"/><rect x="24" y="540.94" width="4" height="1" fill="#b6b0a0"/><rect x="24" y="558.02" width="4" height="1" fill="#b6b0a0"/><rect x="24" y="575.11" width="4" height="1" fill="#b6b0a0"/><rect x="24" y="592.19" width="4" height="1" fill="#b6b0a0"/><rect x="24" y="609.27" width="4" height="1" fill="#b6b0a0"/><rect x="24" y="626.35" width="4" height="1" fill="#b6b0a0"/><rect x="24" y="643.43" width="4" height="1" fill="#b6b0a0"/><rect x="24" y="660.52" width="4" height="1" fill="#b6b0a0"/><rect x="24" y="677.60" width="4" height="1" fill="#b6b0a0"/><rect x="24" y="694.68" width="4" height="1" fill="#b6b0a0"/><rect x="24" y="711.76" width="4" height="1" fill="#b6b0a0"/><rect x="24" y="728.84" width="4" height="1" fill="#b6b0a0"/><rect x="24" y="745.93" width="4" height="1" fill="#b6b0a0"/><rect x="24" y="763.01" width="4" height="1" fill="#b6b0a0"/><rect x="24" y="780.09" width="4" height="1" fill="#b6b0a0"/><rect x="24" y="797.17" width="4" height="1" fill="#b6b0a0"/><rect x="24" y="814.25" width="4" height="1" fill="#b6b0a0"/><rect x="24" y="831.34" width="4" height="1" fill="#b6b0a0"/><rect x="24" y="848.42" width="4" height="1" fill="#b6b0a0"/><rect x="24" y="865.50" width="4" height="1" fill="#b6b0a0"/><path d="M4 687h14l5 5.500l-5 5.500h-14z" fill="#0078d7"/></svg></div><div id="transit" class="abs" style="left:961px;top:0;width:960px;height:1040px;background:#f0f0f0"></div><div class="abs" style="left:0;top:0;width:0;height:0"><div class="abs" style="left:962px;top:1px;width:1958px;height:56px;background:#fff"></div><svg class="abs" style="left:970px;top:7px" width="16" height="16" viewBox="0 0 16 16"><rect x="0.500" y="0.500" width="15" height="15" fill="#f3ece4" stroke="#2a8ad8"/><rect x="2.800" y="1.800" width="10.400" height="11.600" rx="2.600" fill="#0f86d6"/><rect x="6.200" y="2.100" width="3.700" height="0.900" fill="#fff"/><rect x="4.100" y="4.200" width="7.800" height="2.900" rx="0.600" fill="#2c5c78"/><text x="8" y="12.300" font-size="6.500" font-weight="bold" text-anchor="middle" fill="#000">2</text><rect x="3.600" y="11" width="1.500" height="0.900" fill="#d8ecfa"/><rect x="10.900" y="11" width="1.500" height="0.900" fill="#d8ecfa"/><path d="M5.200 13.200L3.300 15.300M10.800 13.200L12.700 15.300M3.600 14.600H12.400" stroke="#111" stroke-width="1.100" fill="none"/></svg><span class="t" style="left:991.28px;top:15.84px;font-size:12px;color:#999;transform:scaleX(0.9330);">TRANSIT-2 v0.99.90  -  TfGM Tests  -  General Tests  \  TFGM-769 Drive off map RTC OUT</span><svg class="abs" style="left:1790px;top:0" width="130" height="31"><line x1="10.500" y1="15.500" x2="20.500" y2="15.500" stroke="#999"/><rect x="55.500" y="10.500" width="10" height="10" fill="none" stroke="#999"/><path d="M101.500 10.500l10 10M111.500 10.500l-10 10" stroke="#777" stroke-width="1"/></svg><span class="t" style="left:969.51px;top:45.31px;font-size:14.4px;color:#929292;transform:scaleX(1.0756);">File</span><span class="t" style="left:1010.45px;top:45.31px;font-size:14.4px;color:#929292;transform:scaleX(1.0392);">Test suite</span><span class="t" style="left:1088.47px;top:45.31px;font-size:14.4px;color:#929292;transform:scaleX(1.0785);">CAN</span><span class="t" style="left:1136.69px;top:45.31px;font-size:14.4px;color:#929292;transform:scaleX(1.0650);">Tracklink</span><span class="t" style="left:1214.17px;top:45.31px;font-size:14.4px;color:#929292;transform:scaleX(1.0927);">View</span><span class="t" style="left:1263.22px;top:45.31px;font-size:14.4px;color:#929292;transform:scaleX(1.1125);">Help</span><div class="btn" style="left:973px;top:69px;width:28px;height:47px"><svg width="28" height="47" viewBox="0 0 28 47"><rect x="3.300" y="3.300" width="21.400" height="39.800" rx="4" fill="#fff" stroke="#000" stroke-width="1.300"/><path d="M22 6V14.500L12.500 23.500L22 32.500V41L4.800 23.500Z" fill="#2cb414" stroke="#1a8a0a" stroke-width="0.800" stroke-linejoin="round"/><path d="M22 6V14.500L12.500 23.500H4.800Z" fill="#66d448"/></svg></div><div class="btn" style="left:1013px;top:69px;width:47px;height:47px"><svg width="47" height="47" viewBox="0 0 47 47"><rect x="8" y="3.300" width="31" height="39.800" rx="3.200" fill="#fff" stroke="#000" stroke-width="1.300"/><path d="M14.600 9.800V34.800M14.600 18.400H21" stroke="#222" stroke-width="1" fill="none"/><path d="M19.100 11.200H34.100M26 19.600H34.100M19.100 28.400H34.100M19.100 36H34.100" stroke="#222" stroke-width="1.200"/><rect x="12.9" y="8.100000000000001" width="3.400" height="3.400" fill="#7fe060" stroke="#2a7a18" stroke-width="0.800"/><rect x="19.400000000000002" y="16.7" width="3.400" height="3.400" fill="#7fe060" stroke="#2a7a18" stroke-width="0.800"/><rect x="12.9" y="25.2" width="3.400" height="3.400" fill="#7fe060" stroke="#2a7a18" stroke-width="0.800"/><rect x="12.9" y="33.099999999999994" width="3.400" height="3.400" fill="#7fe060" stroke="#2a7a18" stroke-width="0.800"/></svg></div><div class="btn" style="left:1073px;top:69px;width:47px;height:47px"><svg width="47" height="47" viewBox="0 0 47 47"><rect x="8" y="3.300" width="31" height="39.800" rx="3.200" fill="#fff" stroke="#000" stroke-width="1.300"/><text transform="translate(14.03,12.50) scale(0.8524,1)" font-size="8.7" fill="#222" font-weight="bold" >TEST</text><path d="M19.100 19.600H34.100M19.100 28.400H34.100M19.100 36H34.100" stroke="#222" stroke-width="1.200"/><rect x="12.8" y="16.7" width="3.400" height="3.400" fill="#7fe060" stroke="#2a7a18" stroke-width="0.800"/><rect x="12.8" y="25.2" width="3.400" height="3.400" fill="#7fe060" stroke="#2a7a18" stroke-width="0.800"/><rect x="12.8" y="33.099999999999994" width="3.400" height="3.400" fill="#7fe060" stroke="#2a7a18" stroke-width="0.800"/></svg></div><div class="btn" style="left:1133px;top:69px;width:28px;height:47px"><svg width="28" height="47" viewBox="0 0 28 47"><rect x="3.300" y="3.300" width="21.400" height="39.800" rx="4" fill="#fff" stroke="#000" stroke-width="1.300"/><path d="M6 6V14.500L15.500 23.500L6 32.500V41L23.200 23.500Z" fill="#2cb414" stroke="#1a8a0a" stroke-width="0.800" stroke-linejoin="round"/><path d="M6 6V14.500L15.500 23.500H23.200Z" fill="#66d448"/></svg></div><div class="btn dis" style="left:1183px;top:69px;width:47px;height:47px"><svg width="47" height="47" viewBox="0 0 47 47"><rect x="4.5" y="8.500" width="7.500" height="30" rx="2.200" fill="#a9a9a9" stroke="#a0a0a0" stroke-width="1"/><rect x="5.3" y="9.300" width="3.200" height="15" rx="1.500" fill="#dadada" opacity="0.700"/><clipPath id="t1"><path d="M39 10.5 L39 36.5 L17.5 23.5Z" stroke-width="3"/></clipPath><path d="M39 10.5 L39 36.5 L17.5 23.5Z" fill="#a9a9a9" stroke="#a0a0a0" stroke-width="3" stroke-linejoin="round"/><path d="M39 10.5 L39 36.5 L17.5 23.5Z" fill="#a9a9a9"/><g clip-path="url(#t1)"><ellipse cx="34" cy="9" rx="27" ry="15" transform="rotate(20 34 9)" fill="#dadada" opacity="0.750"/></g></svg></div><div class="btn dis" style="left:1243px;top:69px;width:47px;height:47px"><svg width="47" height="47" viewBox="0 0 47 47"><clipPath id="sq1"><rect x="7.500" y="8" width="31" height="31" rx="5.500"/></clipPath><rect x="7.500" y="8" width="31" height="31" rx="5.500" fill="#a4a4a4" stroke="#989898" stroke-width="1"/><g clip-path="url(#sq1)"><path d="M7 8H39V14C30 18 20 22 7 33Z" fill="#d8d8d8" opacity="0.850"/></g></svg></div><div class="btn" style="left:1303px;top:69px;width:47px;height:47px"><svg width="47" height="47" viewBox="0 0 47 47"><clipPath id="t2"><path d="M12 10.5 L12 36.5 L35 23.5Z" stroke-width="3"/></clipPath><path d="M12 10.5 L12 36.5 L35 23.5Z" fill="#25ab0b" stroke="#1c9a08" stroke-width="3" stroke-linejoin="round"/><path d="M12 10.5 L12 36.5 L35 23.5Z" fill="#25ab0b"/><g clip-path="url(#t2)"><ellipse cx="12" cy="9" rx="27" ry="15" transform="rotate(-22 12 9)" fill="#8fe878" opacity="0.750"/></g></svg></div><div class="btn" style="left:1363px;top:69px;width:47px;height:47px"><svg width="47" height="47" viewBox="0 0 47 47"><defs><linearGradient id="ft1" x1="0" y1="0" x2="0" y2="1"><stop offset="0" stop-color="#86dc74"/><stop offset="0.550" stop-color="#6fd05c"/><stop offset="0.600" stop-color="#2ea81c"/><stop offset="1" stop-color="#2aa016"/></linearGradient><linearGradient id="ft2" x1="0" y1="0" x2="0" y2="1"><stop offset="0" stop-color="#3aa828"/><stop offset="1" stop-color="#2cc010"/></linearGradient></defs><g stroke="#1a6a1a" stroke-width="1.100" stroke-linejoin="round"><path d="M16.800 28.500C17.300 32.500 23.500 32.500 22.800 27.500L21.800 22.500C23.500 18 24 14.500 20.500 14.300C16 14 13.300 16.500 14 20C14.600 23 16.300 25.500 16.800 28.500Z" fill="url(#ft1)"/><ellipse cx="21.700" cy="11.600" rx="2" ry="2.500" fill="#86dc74"/><circle cx="18.600" cy="12.200" r="1.200" fill="#86dc74"/><circle cx="16.400" cy="13.300" r="1.100" fill="#86dc74"/><circle cx="14.500" cy="14.700" r="1" fill="#86dc74"/><circle cx="13" cy="16.400" r="0.900" fill="#86dc74"/><path d="M24.300 22.500C23.500 27 24.300 30 24.200 33.500C23.500 39.500 30 39.500 30.300 35C31 31 33.800 27.500 34.300 24.500C34.800 21.500 31.500 20.800 28.500 20.900C26 21 24.600 21.200 24.300 22.500Z" fill="url(#ft2)"/><ellipse cx="25.500" cy="18.600" rx="1.900" ry="2.200" fill="#6fdc5c"/><circle cx="28.400" cy="18.500" r="1.200" fill="#4cc038"/><circle cx="30.900" cy="19.500" r="1.100" fill="#3aa828"/><circle cx="32.900" cy="21" r="1" fill="#3aa828"/><circle cx="34.300" cy="22.800" r="0.900" fill="#3aa828"/></g></svg></div><div class="btn" style="left:1423px;top:69px;width:47px;height:47px"><svg width="47" height="47" viewBox="0 0 47 47"><clipPath id="t3"><path d="M6 10.5 L6 36.5 L28.5 23.5Z" stroke-width="3"/></clipPath><path d="M6 10.5 L6 36.5 L28.5 23.5Z" fill="#25ab0b" stroke="#1c9a08" stroke-width="3" stroke-linejoin="round"/><path d="M6 10.5 L6 36.5 L28.5 23.5Z" fill="#25ab0b"/><g clip-path="url(#t3)"><ellipse cx="12" cy="9" rx="27" ry="15" transform="rotate(-22 12 9)" fill="#8fe878" opacity="0.750"/></g><rect x="33.8" y="8.500" width="7.500" height="30" rx="2.200" fill="#25ab0b" stroke="#1c9a08" stroke-width="1"/><rect x="34.599999999999994" y="9.300" width="3.200" height="15" rx="1.500" fill="#8fe878" opacity="0.700"/></svg></div><span class="t" style="left:1539.03px;top:78.52px;font-size:11.5px;color:#8a8a8a;transform:scaleX(0.9713);">Time:</span><span class="t" style="left:1548.69px;top:94.40px;font-size:15.3px;color:#000;transform:scaleX(0.9121);">0. 000</span><span class="t" style="left:1589.77px;top:94.40px;font-size:15.3px;color:#000;transform:scaleX(0.9316);">s</span><span class="t" style="left:1633.32px;top:78.52px;font-size:11.5px;color:#8a8a8a;transform:scaleX(1.0067);">Distance:</span><span class="t" style="left:1652.85px;top:94.40px;font-size:15.3px;color:#000;transform:scaleX(0.9029);">0. 00</span><span class="t" style="left:1685.92px;top:94.40px;font-size:15.3px;color:#000;transform:scaleX(1.0893);">m</span><span class="t" style="left:1744.50px;top:78.52px;font-size:11.5px;color:#8a8a8a;transform:scaleX(0.9757);">Speed:</span><span class="t" style="left:1748.94px;top:94.40px;font-size:15.3px;color:#000;transform:scaleX(0.9181);">0. 00</span><span class="t" style="left:1782.39px;top:94.40px;font-size:15.3px;color:#000;transform:scaleX(1.0191);">mph</span><span class="t" style="left:1000.21px;top:150.20px;font-size:15.3px;color:#000;transform:scaleX(0.9322);">TFGM-769 Drive off map RTC OUT</span><div class="btn" style="left:1658px;top:130px;width:37px;height:37px"><svg width="37" height="37" viewBox="0 0 37 37"><rect x="2.600" y="2.600" width="30.700" height="30.900" rx="3.500" fill="#fff" stroke="#111" stroke-width="1.300"/><path d="M2.600 7.900h30.700" stroke="#111" stroke-width="1"/><path d="M4.500 5.200h1.300M7 5.200h1.300M9.500 5.200h1.300" stroke="#888" stroke-width="1.200"/><path d="M5 13.100h2.800M5 17h2.800M5 21.100h2.800M5 25h2.800M5 28.900h2.800" stroke="#111" stroke-width="1.300"/><path d="M9.300 13.100h13M9.300 17h10M9.300 21.100h7M9.300 25h4M9.300 28.900h2.500M27 21.100h4.500M22.500 25h9M18 28.900h13.500" stroke="#111" stroke-width="1.300"/><path d="M13.400 28.600L15.300 23L27.300 11.200Q29 10 30.500 11.500Q32 13 30.800 14.700L19 26.600Z" fill="#fff" stroke="#111" stroke-width="1.700" stroke-linejoin="round"/><path d="M13.400 28.600L15.300 23L19 26.600Z" fill="#111"/><path d="M26 12.500L29.600 16" stroke="#111" stroke-width="1"/><path d="M28 10.700Q29.500 10 30.700 11.300Q32 12.700 31 14.200Z" fill="#111"/></svg></div><div class="btn" style="left:1738px;top:130px;width:37px;height:37px"><svg width="37" height="36" viewBox="0 0 37 36"><g><path d="M22 22l4.500 4.500" stroke="#777" stroke-width="3.400"/><path d="M24.300 27.200L28.300 23.500L33.400 28V33H29Z" fill="#b58d55" stroke="#1a1208" stroke-width="1.300" stroke-linejoin="round"/><circle cx="15.800" cy="15.400" r="12.700" fill="#858585" stroke="#111" stroke-width="1.600"/><circle cx="15.800" cy="15.400" r="9.600" fill="none" stroke="#a8a8a8" stroke-width="2.400"/><circle cx="15.800" cy="15.400" r="7.800" fill="#5e9ce6"/><path d="M8 14.500a7.800 7.800 0 0 1 15.600 0q-7.800 -3 -15.600 0z" fill="#9cc4f4" opacity="0.750"/><path d="M10.3 15.4h11M15.8 9.900v11" stroke="#fff" stroke-width="2.300"/></g></svg></div><div class="btn" style="left:1794px;top:130px;width:37px;height:37px"><svg width="37" height="36" viewBox="0 0 37 36"><g><path d="M22 22l4.500 4.500" stroke="#777" stroke-width="3.400"/><path d="M24.300 27.200L28.300 23.500L33.400 28V33H29Z" fill="#b58d55" stroke="#1a1208" stroke-width="1.300" stroke-linejoin="round"/><circle cx="15.800" cy="15.400" r="12.700" fill="#858585" stroke="#111" stroke-width="1.600"/><circle cx="15.800" cy="15.400" r="9.600" fill="none" stroke="#a8a8a8" stroke-width="2.400"/><circle cx="15.800" cy="15.400" r="7.800" fill="#5e9ce6"/><path d="M8 14.500a7.800 7.800 0 0 1 15.600 0q-7.800 -3 -15.600 0z" fill="#9cc4f4" opacity="0.750"/><text x="15.800" y="18.400" font-size="8.500" fill="#fff" text-anchor="middle" textLength="11" lengthAdjust="spacingAndGlyphs">All</text></g></svg></div><div class="btn" style="left:1850px;top:130px;width:37px;height:37px"><svg width="37" height="36" viewBox="0 0 37 36"><g><path d="M22 22l4.500 4.500" stroke="#777" stroke-width="3.400"/><path d="M24.300 27.200L28.300 23.500L33.400 28V33H29Z" fill="#b58d55" stroke="#1a1208" stroke-width="1.300" stroke-linejoin="round"/><circle cx="15.800" cy="15.400" r="12.700" fill="#858585" stroke="#111" stroke-width="1.600"/><circle cx="15.800" cy="15.400" r="9.600" fill="none" stroke="#a8a8a8" stroke-width="2.400"/><circle cx="15.800" cy="15.400" r="7.800" fill="#5e9ce6"/><path d="M8 14.500a7.800 7.800 0 0 1 15.600 0q-7.800 -3 -15.600 0z" fill="#9cc4f4" opacity="0.750"/><path d="M10.300 15.400h11" stroke="#fff" stroke-width="2.300"/></g></svg></div><svg class="abs" style="left:962px;top:170px" width="958" height="100" viewBox="962 170 958 100"><clipPath id="c1"><rect x="1098.500" y="173" width="789" height="78"/></clipPath><rect x="1098" y="251" width="791" height="1" fill="#fff"/><rect x="1888" y="173" width="1" height="79" fill="#fff"/><rect x="1099" y="196" width="769" height="13.500" fill="#d4f0d0"/><rect x="1099" y="212" width="769" height="13.500" fill="#d4f0d0"/><rect x="1099" y="226" width="769" height="1.800" fill="#000"/><g clip-path="url(#c1)"><text transform="translate(1096.00,242.30) scale(1.0361,1)" font-size="9.6" fill="#000" >0.00</text></g><rect x="1185" y="227.500" width="1" height="6.500" fill="#000"/><text transform="translate(1174.26,242.30) scale(0.9278,1)" font-size="9.6" fill="#000" >50.00</text><rect x="1271" y="227.500" width="1" height="6.500" fill="#000"/><text transform="translate(1258.06,242.30) scale(0.9393,1)" font-size="9.6" fill="#000" >100.00</text><rect x="1358" y="227.500" width="1" height="6.500" fill="#000"/><text transform="translate(1344.68,242.30) scale(0.9393,1)" font-size="9.6" fill="#000" >150.00</text><rect x="1444" y="227.500" width="1" height="6.500" fill="#000"/><text transform="translate(1431.53,242.30) scale(0.9314,1)" font-size="9.6" fill="#000" >200.00</text><rect x="1531" y="227.500" width="1" height="6.500" fill="#000"/><text transform="translate(1518.15,242.30) scale(0.9314,1)" font-size="9.6" fill="#000" >250.00</text><rect x="1618" y="227.500" width="1" height="6.500" fill="#000"/><text transform="translate(1604.86,242.30) scale(0.9283,1)" font-size="9.6" fill="#000" >300.00</text><rect x="1704" y="227.500" width="1" height="6.500" fill="#000"/><text transform="translate(1691.48,242.30) scale(0.9283,1)" font-size="9.6" fill="#000" >350.00</text><rect x="1791" y="227.500" width="1" height="6.500" fill="#000"/><text transform="translate(1778.28,242.30) scale(0.9221,1)" font-size="9.6" fill="#000" >400.00</text><rect x="1099.500" y="197" width="46" height="12.500" fill="#008400" stroke="#00cc00"/><text transform="translate(1100.06,207.30) scale(1.0252,1)" font-size="11.5" fill="#fff" >Forward</text><rect x="1099.500" y="212.800" width="20.500" height="12.700" fill="#008400" stroke="#00cc00"/><text transform="translate(1100.25,223.50) scale(0.8862,1)" font-size="11.5" fill="#fff" >Yes</text><text transform="translate(1039.62,207.50) scale(0.9276,1)" font-size="11.8" fill="#000" >DOT</text><text transform="translate(1039.96,223.70) scale(0.9114,1)" font-size="11.8" fill="#000" >GNSS Cov</text><g clip-path="url(#c1)"><text transform="translate(1850.83,252.60) scale(0.9102,1)" font-size="9.6" fill="#000" >443.74</text></g><rect x="1878" y="227" width="1" height="17" fill="#fff"/><rect x="1098" y="173" width="1.200" height="78" fill="#00e5ee"/><rect x="1889" y="190" width="15" height="41" fill="#cdcdcd"/><polyline points="1892.60,183.70 1896.00,180.30 1899.40,183.70" fill="none" stroke="#555" stroke-width="2.1"/><polyline points="1892.60,240.30 1896.00,243.70 1899.40,240.30" fill="none" stroke="#555" stroke-width="2.1"/><polyline points="1107.70,256.60 1104.30,260.00 1107.70,263.40" fill="none" stroke="#bdbdbd" stroke-width="2.1"/><polyline points="1878.30,256.60 1881.70,260.00 1878.30,263.40" fill="none" stroke="#bdbdbd" stroke-width="2.1"/></svg><div class="box" style="left:971px;top:274px;width:936px;height:244px;border:1px solid #fbfbfb"></div><div class="box" style="left:970px;top:273px;width:935px;height:244px;border:1px solid #828790"></div><span class="t" style="left:999.91px;top:294.50px;font-size:15.3px;color:#000;transform:scaleX(0.9335);">TFGM-769 Drive off map RTC OUT</span><div class="btn" style="left:1658px;top:282px;width:37px;height:37px"><svg width="37" height="37" viewBox="0 0 37 37"><rect x="2.600" y="2.600" width="30.700" height="30.900" rx="3.500" fill="#fff" stroke="#111" stroke-width="1.300"/><path d="M2.600 7.900h30.700" stroke="#111" stroke-width="1"/><path d="M4.500 5.200h1.300M7 5.200h1.300M9.500 5.200h1.300" stroke="#888" stroke-width="1.200"/><path d="M5 13.100h2.800M5 17h2.800M5 21.100h2.800M5 25h2.800M5 28.900h2.800" stroke="#111" stroke-width="1.300"/><path d="M9.300 13.100h13M9.300 17h10M9.300 21.100h7M9.300 25h4M9.300 28.900h2.500M27 21.100h4.500M22.500 25h9M18 28.900h13.500" stroke="#111" stroke-width="1.300"/><path d="M13.400 28.600L15.300 23L27.300 11.200Q29 10 30.500 11.500Q32 13 30.800 14.700L19 26.600Z" fill="#fff" stroke="#111" stroke-width="1.700" stroke-linejoin="round"/><path d="M13.400 28.600L15.300 23L19 26.600Z" fill="#111"/><path d="M26 12.500L29.600 16" stroke="#111" stroke-width="1"/><path d="M28 10.700Q29.500 10 30.700 11.300Q32 12.700 31 14.200Z" fill="#111"/></svg></div><div class="btn" style="left:1738px;top:282px;width:37px;height:37px"><svg width="37" height="36" viewBox="0 0 37 36"><g><path d="M22 22l4.500 4.500" stroke="#777" stroke-width="3.400"/><path d="M24.300 27.200L28.300 23.500L33.400 28V33H29Z" fill="#b58d55" stroke="#1a1208" stroke-width="1.300" stroke-linejoin="round"/><circle cx="15.800" cy="15.400" r="12.700" fill="#858585" stroke="#111" stroke-width="1.600"/><circle cx="15.800" cy="15.400" r="9.600" fill="none" stroke="#a8a8a8" stroke-width="2.400"/><circle cx="15.800" cy="15.400" r="7.800" fill="#5e9ce6"/><path d="M8 14.500a7.800 7.800 0 0 1 15.600 0q-7.800 -3 -15.600 0z" fill="#9cc4f4" opacity="0.750"/><path d="M10.3 15.4h11M15.8 9.900v11" stroke="#fff" stroke-width="2.300"/></g></svg></div><div class="btn" style="left:1794px;top:282px;width:37px;height:37px"><svg width="37" height="36" viewBox="0 0 37 36"><g><path d="M22 22l4.500 4.500" stroke="#777" stroke-width="3.400"/><path d="M24.300 27.200L28.300 23.500L33.400 28V33H29Z" fill="#b58d55" stroke="#1a1208" stroke-width="1.300" stroke-linejoin="round"/><circle cx="15.800" cy="15.400" r="12.700" fill="#858585" stroke="#111" stroke-width="1.600"/><circle cx="15.800" cy="15.400" r="9.600" fill="none" stroke="#a8a8a8" stroke-width="2.400"/><circle cx="15.800" cy="15.400" r="7.800" fill="#5e9ce6"/><path d="M8 14.500a7.800 7.800 0 0 1 15.600 0q-7.800 -3 -15.600 0z" fill="#9cc4f4" opacity="0.750"/><text x="15.800" y="18.400" font-size="8.500" fill="#fff" text-anchor="middle" textLength="11" lengthAdjust="spacingAndGlyphs">All</text></g></svg></div><div class="btn" style="left:1850px;top:282px;width:37px;height:37px"><svg width="37" height="36" viewBox="0 0 37 36"><g><path d="M22 22l4.500 4.500" stroke="#777" stroke-width="3.400"/><path d="M24.300 27.200L28.300 23.500L33.400 28V33H29Z" fill="#b58d55" stroke="#1a1208" stroke-width="1.300" stroke-linejoin="round"/><circle cx="15.800" cy="15.400" r="12.700" fill="#858585" stroke="#111" stroke-width="1.600"/><circle cx="15.800" cy="15.400" r="9.600" fill="none" stroke="#a8a8a8" stroke-width="2.400"/><circle cx="15.800" cy="15.400" r="7.800" fill="#5e9ce6"/><path d="M8 14.500a7.800 7.800 0 0 1 15.600 0q-7.800 -3 -15.600 0z" fill="#9cc4f4" opacity="0.750"/><path d="M10.300 15.400h11" stroke="#fff" stroke-width="2.300"/></g></svg></div><svg class="abs" style="left:971px;top:274px" width="933" height="242" viewBox="971 274 933 242"><rect x="971" y="499" width="933" height="1" fill="#fff"/><line x1="1537.400" y1="302.700" x2="1569.800" y2="302.700" stroke="#5b8fd0" stroke-width="1.600"/><rect x="1549.200" y="298.200" width="9" height="9" fill="#7da2d8" stroke="#5585c8" stroke-width="1"/><text transform="translate(1573.20,307.00) scale(1.0441,1)" font-size="11" fill="#4a7ebb" >All channels</text><line x1="1035" y1="345.5" x2="1886" y2="345.5" stroke="#9a9a9a" stroke-width="1" stroke-dasharray="4 3"/><rect x="1031.500" y="345" width="3.500" height="1" fill="#111"/><line x1="1035" y1="370.5" x2="1886" y2="370.5" stroke="#9a9a9a" stroke-width="1" stroke-dasharray="4 3"/><rect x="1031.500" y="370" width="3.500" height="1" fill="#111"/><line x1="1035" y1="394.5" x2="1886" y2="394.5" stroke="#9a9a9a" stroke-width="1" stroke-dasharray="4 3"/><rect x="1031.500" y="394" width="3.500" height="1" fill="#111"/><line x1="1035" y1="419.4" x2="1886" y2="419.4" stroke="#9a9a9a" stroke-width="1" stroke-dasharray="4 3"/><rect x="1031.500" y="419" width="3.500" height="1" fill="#111"/><line x1="1035" y1="443.4" x2="1886" y2="443.4" stroke="#9a9a9a" stroke-width="1" stroke-dasharray="4 3"/><rect x="1031.500" y="443" width="3.500" height="1" fill="#111"/><clipPath id="c2"><rect x="996.500" y="335" width="40" height="20"/></clipPath><g clip-path="url(#c2)"><text transform="translate(992.96,349.00) scale(1.1161,1)" font-size="9.6" fill="#000" >25 mph</text></g><text transform="translate(1018.43,374.10) scale(0.9756,1)" font-size="9.6" fill="#000" >20</text><text transform="translate(1018.61,398.10) scale(0.9631,1)" font-size="9.6" fill="#000" >15</text><text x="1018.18" y="423.00" font-size="9.6" fill="#000" >10</text><text transform="translate(1023.51,447.00) scale(1.0088,1)" font-size="9.6" fill="#000" >5</text><text transform="translate(1023.30,469.80) scale(1.0417,1)" font-size="9.6" fill="#000" >0</text><line x1="1095.1" y1="393" x2="1095.1" y2="466" stroke="#d8b860" stroke-width="1.500"/><line x1="1119.1999999999998" y1="418.2" x2="1119.1999999999998" y2="466" stroke="#d8b860" stroke-width="1.500"/><line x1="1263.0" y1="418.2" x2="1263.0" y2="466" stroke="#d8b860" stroke-width="1.500"/><line x1="1273.8999999999999" y1="427.8" x2="1273.8999999999999" y2="466" stroke="#d8b860" stroke-width="1.500"/><line x1="1388.8999999999999" y1="427.8" x2="1388.8999999999999" y2="466" stroke="#d8b860" stroke-width="1.500"/><line x1="1397.5" y1="442.6" x2="1397.5" y2="466" stroke="#d8b860" stroke-width="1.500"/><line x1="1622.8" y1="442.6" x2="1622.8" y2="466" stroke="#d8b860" stroke-width="1.500"/><line x1="1628.0" y1="427.6" x2="1628.0" y2="466" stroke="#d8b860" stroke-width="1.500"/><line x1="1806.1" y1="427.6" x2="1806.1" y2="466" stroke="#d8b860" stroke-width="1.500"/><rect x="1035" y="465.400" width="851" height="1.700" fill="#666"/><rect x="1127" y="467" width="1" height="6.500" fill="#111"/><rect x="1219" y="467" width="1" height="6.500" fill="#111"/><rect x="1310" y="467" width="1" height="6.500" fill="#111"/><rect x="1402" y="467" width="1" height="6.500" fill="#111"/><rect x="1494" y="467" width="1" height="6.500" fill="#111"/><rect x="1586" y="467" width="1" height="6.500" fill="#111"/><rect x="1678" y="467" width="1" height="6.500" fill="#111"/><rect x="1770" y="467" width="1" height="6.500" fill="#111"/><rect x="1862" y="467" width="1" height="6.500" fill="#111"/><text transform="translate(1024.45,483.60) scale(0.9230,1)" font-size="9.6" fill="#000" >0.00s</text><text transform="translate(1113.79,483.60) scale(0.9175,1)" font-size="9.6" fill="#000" >10.00s</text><text transform="translate(1205.91,483.60) scale(0.9097,1)" font-size="9.6" fill="#000" >20.00s</text><text transform="translate(1297.90,483.60) scale(0.9066,1)" font-size="9.6" fill="#000" >30.00s</text><text transform="translate(1389.98,483.60) scale(0.9004,1)" font-size="9.6" fill="#000" >40.00s</text><text transform="translate(1481.70,483.60) scale(0.9066,1)" font-size="9.6" fill="#000" >50.00s</text><text transform="translate(1573.51,483.60) scale(0.9097,1)" font-size="9.6" fill="#000" >60.00s</text><text transform="translate(1665.41,483.60) scale(0.9097,1)" font-size="9.6" fill="#000" >70.00s</text><text transform="translate(1757.36,483.60) scale(0.9081,1)" font-size="9.6" fill="#000" >80.00s</text><text transform="translate(1849.26,483.60) scale(0.9081,1)" font-size="9.6" fill="#000" >90.00s</text><text transform="translate(1872.59,494.00) scale(0.9384,1)" font-size="9.6" fill="#000" >92.50</text><rect x="1884.800" y="470" width="1" height="8" fill="#fff"/><polyline points="1035,466 1051.4,466 1094.5,393 1118.6,418.2 1262.4,418.2 1273.3,427.8 1388.3,427.8 1396.9,442.6 1622.2,442.6 1627.4,427.6 1805.5,427.6 1833.3,466 1883.4,466" fill="none" stroke="#5b8fd0" stroke-width="2.100" stroke-linejoin="round"/><rect x="1030.5" y="461.5" width="9" height="9" fill="#7da2d8" fill-opacity="0.850" stroke="#5585c8" stroke-width="1"/><rect x="1046.9" y="461.5" width="9" height="9" fill="#7da2d8" fill-opacity="0.850" stroke="#5585c8" stroke-width="1"/><rect x="1090.0" y="388.5" width="9" height="9" fill="#7da2d8" fill-opacity="0.850" stroke="#5585c8" stroke-width="1"/><rect x="1114.1" y="413.7" width="9" height="9" fill="#7da2d8" fill-opacity="0.850" stroke="#5585c8" stroke-width="1"/><rect x="1257.9" y="413.7" width="9" height="9" fill="#7da2d8" fill-opacity="0.850" stroke="#5585c8" stroke-width="1"/><rect x="1268.8" y="423.3" width="9" height="9" fill="#7da2d8" fill-opacity="0.850" stroke="#5585c8" stroke-width="1"/><rect x="1383.8" y="423.3" width="9" height="9" fill="#7da2d8" fill-opacity="0.850" stroke="#5585c8" stroke-width="1"/><rect x="1392.4" y="438.1" width="9" height="9" fill="#7da2d8" fill-opacity="0.850" stroke="#5585c8" stroke-width="1"/><rect x="1617.7" y="438.1" width="9" height="9" fill="#7da2d8" fill-opacity="0.850" stroke="#5585c8" stroke-width="1"/><rect x="1622.9" y="423.1" width="9" height="9" fill="#7da2d8" fill-opacity="0.850" stroke="#5585c8" stroke-width="1"/><rect x="1801.0" y="423.1" width="9" height="9" fill="#7da2d8" fill-opacity="0.850" stroke="#5585c8" stroke-width="1"/><rect x="1828.8" y="461.5" width="9" height="9" fill="#7da2d8" fill-opacity="0.850" stroke="#5585c8" stroke-width="1"/><rect x="1878.9" y="461.5" width="9" height="9" fill="#7da2d8" fill-opacity="0.850" stroke="#5585c8" stroke-width="1"/><rect x="1034.500" y="345" width="1.500" height="154" fill="#00e5ee"/><polyline points="980.40,504.10 977.00,507.50 980.40,510.90" fill="none" stroke="#bdbdbd" stroke-width="2.1"/><polyline points="1893.90,504.10 1897.30,507.50 1893.90,510.90" fill="none" stroke="#bdbdbd" stroke-width="2.1"/></svg><span class="t" style="left:999.91px;top:546.70px;font-size:15.3px;color:#000;transform:scaleX(0.9432);">TFGM-769 Drive off map ECC INB</span><span class="t" style="left:1233.84px;top:543.62px;font-size:11.2px;color:#2020f0;transform:scaleX(0.9557);">Rack-A</span><span class="t" style="left:1233.83px;top:554.72px;font-size:11.2px;color:#109010;transform:scaleX(0.9709);">Rack-B</span><div class="box" style="left:1277px;top:539.5px;width:10px;height:10px;border:1px solid #333;background:#fff"></div><span class="t" style="left:1290.81px;top:543.62px;font-size:11.2px;color:#000;transform:scaleX(0.8695);">TOPS BIR</span><div class="box" style="left:1277px;top:550.5px;width:10px;height:10px;border:1px solid #333;background:#fff"></div><span class="t" style="left:1290.81px;top:554.72px;font-size:11.2px;color:#000;transform:scaleX(0.8695);">TOPS BIR</span><div class="box" style="left:1344px;top:539.5px;width:10px;height:10px;border:1px solid #333;background:#fff"></div><span class="t" style="left:1357.78px;top:543.62px;font-size:11.2px;color:#000;transform:scaleX(0.9764);">TOPS Fault lamp</span><div class="box" style="left:1344px;top:550.5px;width:10px;height:10px;border:1px solid #333;background:#fff"></div><span class="t" style="left:1357.78px;top:554.72px;font-size:11.2px;color:#000;transform:scaleX(0.9764);">TOPS Fault lamp</span><div class="box" style="left:1449px;top:539.5px;width:10px;height:10px;border:1px solid #333;background:#fff"></div><span class="t" style="left:1462.74px;top:543.62px;font-size:11.2px;color:#000;transform:scaleX(1.0260);">Vigilance Ala</span><div class="box" style="left:1449px;top:550.5px;width:10px;height:10px;border:1px solid #333;background:#fff"></div><span class="t" style="left:1462.74px;top:554.72px;font-size:11.2px;color:#000;transform:scaleX(1.0260);">Vigilance Ala</span><span class="t" style="left:1551.00px;top:534.81px;font-size:11.8px;color:#999;transform:scaleX(1.0098);">Channel height:</span><div class="box" style="left:1552px;top:545px;width:81px;height:21px;border:1px solid #adadad;background:#e1e1e1"></div><span class="t" style="left:1556.18px;top:557.09px;font-size:13.3px;color:#000;transform:scaleX(1.0502);">Medium</span><svg class="abs" style="left:1616px;top:550px" width="14" height="12"><polyline points="2.500,3.500 7,8 11.500,3.500" fill="none" stroke="#444" stroke-width="1.100"/></svg><div class="btn" style="left:1658px;top:527px;width:37px;height:37px"><svg width="37" height="37" viewBox="0 0 37 37"><rect x="2.600" y="2.600" width="30.700" height="30.900" rx="3.500" fill="#fff" stroke="#111" stroke-width="1.300"/><path d="M2.600 7.900h30.700" stroke="#111" stroke-width="1"/><path d="M4.500 5.200h1.300M7 5.200h1.300M9.500 5.200h1.300" stroke="#888" stroke-width="1.200"/><path d="M5 13.100h2.800M5 17h2.800M5 21.100h2.800M5 25h2.800M5 28.900h2.800" stroke="#111" stroke-width="1.300"/><path d="M9.300 13.100h13M9.300 17h10M9.300 21.100h7M9.300 25h4M9.300 28.900h2.500M27 21.100h4.500M22.500 25h9M18 28.900h13.500" stroke="#111" stroke-width="1.300"/><path d="M13.400 28.600L15.300 23L27.300 11.200Q29 10 30.500 11.500Q32 13 30.800 14.700L19 26.600Z" fill="#fff" stroke="#111" stroke-width="1.700" stroke-linejoin="round"/><path d="M13.400 28.600L15.300 23L19 26.600Z" fill="#111"/><path d="M26 12.500L29.600 16" stroke="#111" stroke-width="1"/><path d="M28 10.700Q29.500 10 30.700 11.300Q32 12.700 31 14.200Z" fill="#111"/></svg></div><div class="btn" style="left:1738px;top:527px;width:37px;height:37px"><svg width="37" height="36" viewBox="0 0 37 36"><g><path d="M22 22l4.500 4.500" stroke="#777" stroke-width="3.400"/><path d="M24.300 27.200L28.300 23.500L33.400 28V33H29Z" fill="#b58d55" stroke="#1a1208" stroke-width="1.300" stroke-linejoin="round"/><circle cx="15.800" cy="15.400" r="12.700" fill="#858585" stroke="#111" stroke-width="1.600"/><circle cx="15.800" cy="15.400" r="9.600" fill="none" stroke="#a8a8a8" stroke-width="2.400"/><circle cx="15.800" cy="15.400" r="7.800" fill="#5e9ce6"/><path d="M8 14.500a7.800 7.800 0 0 1 15.600 0q-7.800 -3 -15.600 0z" fill="#9cc4f4" opacity="0.750"/><path d="M10.3 15.4h11M15.8 9.900v11" stroke="#fff" stroke-width="2.300"/></g></svg></div><div class="btn" style="left:1794px;top:527px;width:37px;height:37px"><svg width="37" height="36" viewBox="0 0 37 36"><g><path d="M22 22l4.500 4.500" stroke="#777" stroke-width="3.400"/><path d="M24.300 27.200L28.300 23.500L33.400 28V33H29Z" fill="#b58d55" stroke="#1a1208" stroke-width="1.300" stroke-linejoin="round"/><circle cx="15.800" cy="15.400" r="12.700" fill="#858585" stroke="#111" stroke-width="1.600"/><circle cx="15.800" cy="15.400" r="9.600" fill="none" stroke="#a8a8a8" stroke-width="2.400"/><circle cx="15.800" cy="15.400" r="7.800" fill="#5e9ce6"/><path d="M8 14.500a7.800 7.800 0 0 1 15.600 0q-7.800 -3 -15.600 0z" fill="#9cc4f4" opacity="0.750"/><text x="15.800" y="18.400" font-size="8.500" fill="#fff" text-anchor="middle" textLength="11" lengthAdjust="spacingAndGlyphs">All</text></g></svg></div><div class="btn" style="left:1850px;top:527px;width:37px;height:37px"><svg width="37" height="36" viewBox="0 0 37 36"><g><path d="M22 22l4.500 4.500" stroke="#777" stroke-width="3.400"/><path d="M24.300 27.200L28.300 23.500L33.400 28V33H29Z" fill="#b58d55" stroke="#1a1208" stroke-width="1.300" stroke-linejoin="round"/><circle cx="15.800" cy="15.400" r="12.700" fill="#858585" stroke="#111" stroke-width="1.600"/><circle cx="15.800" cy="15.400" r="9.600" fill="none" stroke="#a8a8a8" stroke-width="2.400"/><circle cx="15.800" cy="15.400" r="7.800" fill="#5e9ce6"/><path d="M8 14.500a7.800 7.800 0 0 1 15.600 0q-7.800 -3 -15.600 0z" fill="#9cc4f4" opacity="0.750"/><path d="M10.300 15.400h11" stroke="#fff" stroke-width="2.300"/></g></svg></div><svg class="abs" style="left:962px;top:572px" width="958" height="270" viewBox="962 572 958 270"><clipPath id="c3"><rect x="1081.5" y="573" width="806" height="248"/></clipPath><clipPath id="c3b"><rect x="962" y="573" width="926" height="248"/></clipPath><rect x="1888" y="573" width="1" height="249" fill="#fff"/><rect x="1081" y="821" width="807" height="1" fill="#fff"/><g clip-path="url(#c3)"><rect x="1081.5" y="573" width="786.5" height="123" fill="#f7f7f2"/><rect x="1081.5" y="730" width="786.5" height="90" fill="#f7f7f2"/><rect x="1081.5" y="557.5" width="786.5" height="26" fill="#ccccfc"/><rect x="1081.5" y="563" width="786.5" height="1" fill="#6e6ef8"/><rect x="1081.5" y="577" width="786.5" height="1" fill="#6e6ef8"/><polyline points="1081.60,576.50 1117.02,576.50 1117.02,562.50 1152.44,562.50 1152.44,576.50 1187.86,576.50 1187.86,562.50 1223.28,562.50 1223.28,576.50 1258.70,576.50 1258.70,562.50 1294.12,562.50 1294.12,576.50 1329.54,576.50 1329.54,562.50 1364.96,562.50 1364.96,576.50 1400.38,576.50 1400.38,562.50 1435.80,562.50 1435.80,576.50 1471.22,576.50 1471.22,562.50 1506.64,562.50 1506.64,576.50 1542.06,576.50 1542.06,562.50 1577.48,562.50 1577.48,576.50 1612.90,576.50 1612.90,562.50 1648.32,562.50 1648.32,576.50 1683.74,576.50 1683.74,562.50 1719.16,562.50 1719.16,576.50 1754.58,576.50 1754.58,562.50 1790.00,562.50 1790.00,576.50 1825.42,576.50 1825.42,562.50 1860.84,562.50 1860.84,576.50 1868.00,576.50" fill="none" stroke="#1010f0" stroke-width="2"/><rect x="1077.10" y="572.00" width="9" height="9" fill="#000080" stroke="#0a0af0" stroke-width="1"/><rect x="1112.52" y="558.00" width="9" height="9" fill="#000080" stroke="#0a0af0" stroke-width="1"/><rect x="1147.94" y="572.00" width="9" height="9" fill="#000080" stroke="#0a0af0" stroke-width="1"/><rect x="1183.36" y="558.00" width="9" height="9" fill="#000080" stroke="#0a0af0" stroke-width="1"/><rect x="1218.78" y="572.00" width="9" height="9" fill="#000080" stroke="#0a0af0" stroke-width="1"/><rect x="1254.20" y="558.00" width="9" height="9" fill="#000080" stroke="#0a0af0" stroke-width="1"/><rect x="1289.62" y="572.00" width="9" height="9" fill="#000080" stroke="#0a0af0" stroke-width="1"/><rect x="1325.04" y="558.00" width="9" height="9" fill="#000080" stroke="#0a0af0" stroke-width="1"/><rect x="1360.46" y="572.00" width="9" height="9" fill="#000080" stroke="#0a0af0" stroke-width="1"/><rect x="1395.88" y="558.00" width="9" height="9" fill="#000080" stroke="#0a0af0" stroke-width="1"/><rect x="1431.30" y="572.00" width="9" height="9" fill="#000080" stroke="#0a0af0" stroke-width="1"/><rect x="1466.72" y="558.00" width="9" height="9" fill="#000080" stroke="#0a0af0" stroke-width="1"/><rect x="1502.14" y="572.00" width="9" height="9" fill="#000080" stroke="#0a0af0" stroke-width="1"/><rect x="1537.56" y="558.00" width="9" height="9" fill="#000080" stroke="#0a0af0" stroke-width="1"/><rect x="1572.98" y="572.00" width="9" height="9" fill="#000080" stroke="#0a0af0" stroke-width="1"/><rect x="1608.40" y="558.00" width="9" height="9" fill="#000080" stroke="#0a0af0" stroke-width="1"/><rect x="1643.82" y="572.00" width="9" height="9" fill="#000080" stroke="#0a0af0" stroke-width="1"/><rect x="1679.24" y="558.00" width="9" height="9" fill="#000080" stroke="#0a0af0" stroke-width="1"/><rect x="1714.66" y="572.00" width="9" height="9" fill="#000080" stroke="#0a0af0" stroke-width="1"/><rect x="1750.08" y="558.00" width="9" height="9" fill="#000080" stroke="#0a0af0" stroke-width="1"/><rect x="1785.50" y="572.00" width="9" height="9" fill="#000080" stroke="#0a0af0" stroke-width="1"/><rect x="1820.92" y="558.00" width="9" height="9" fill="#000080" stroke="#0a0af0" stroke-width="1"/><rect x="1856.34" y="572.00" width="9" height="9" fill="#000080" stroke="#0a0af0" stroke-width="1"/><rect x="1081.5" y="585.6" width="786.5" height="26" fill="#b4b4fa"/><rect x="1081.5" y="591" width="786.5" height="1" fill="#6e6ef8"/><rect x="1081.5" y="605" width="786.5" height="1" fill="#6e6ef8"/><polyline points="1081.60,590.60 1117.02,590.60 1117.02,604.60 1152.44,604.60 1152.44,590.60 1187.86,590.60 1187.86,604.60 1223.28,604.60 1223.28,590.60 1258.70,590.60 1258.70,604.60 1294.12,604.60 1294.12,590.60 1329.54,590.60 1329.54,604.60 1364.96,604.60 1364.96,590.60 1400.38,590.60 1400.38,604.60 1435.80,604.60 1435.80,590.60 1471.22,590.60 1471.22,604.60 1506.64,604.60 1506.64,590.60 1542.06,590.60 1542.06,604.60 1577.48,604.60 1577.48,590.60 1612.90,590.60 1612.90,604.60 1648.32,604.60 1648.32,590.60 1683.74,590.60 1683.74,604.60 1719.16,604.60 1719.16,590.60 1754.58,590.60 1754.58,604.60 1790.00,604.60 1790.00,590.60 1825.42,590.60 1825.42,604.60 1860.84,604.60 1860.84,590.60 1868.00,590.60" fill="none" stroke="#1010f0" stroke-width="2"/><rect x="1077.10" y="586.10" width="9" height="9" fill="#000080" stroke="#0a0af0" stroke-width="1"/><rect x="1112.52" y="600.10" width="9" height="9" fill="#000080" stroke="#0a0af0" stroke-width="1"/><rect x="1147.94" y="586.10" width="9" height="9" fill="#000080" stroke="#0a0af0" stroke-width="1"/><rect x="1183.36" y="600.10" width="9" height="9" fill="#000080" stroke="#0a0af0" stroke-width="1"/><rect x="1218.78" y="586.10" width="9" height="9" fill="#000080" stroke="#0a0af0" stroke-width="1"/><rect x="1254.20" y="600.10" width="9" height="9" fill="#000080" stroke="#0a0af0" stroke-width="1"/><rect x="1289.62" y="586.10" width="9" height="9" fill="#000080" stroke="#0a0af0" stroke-width="1"/><rect x="1325.04" y="600.10" width="9" height="9" fill="#000080" stroke="#0a0af0" stroke-width="1"/><rect x="1360.46" y="586.10" width="9" height="9" fill="#000080" stroke="#0a0af0" stroke-width="1"/><rect x="1395.88" y="600.10" width="9" height="9" fill="#000080" stroke="#0a0af0" stroke-width="1"/><rect x="1431.30" y="586.10" width="9" height="9" fill="#000080" stroke="#0a0af0" stroke-width="1"/><rect x="1466.72" y="600.10" width="9" height="9" fill="#000080" stroke="#0a0af0" stroke-width="1"/><rect x="1502.14" y="586.10" width="9" height="9" fill="#000080" stroke="#0a0af0" stroke-width="1"/><rect x="1537.56" y="600.10" width="9" height="9" fill="#000080" stroke="#0a0af0" stroke-width="1"/><rect x="1572.98" y="586.10" width="9" height="9" fill="#000080" stroke="#0a0af0" stroke-width="1"/><rect x="1608.40" y="600.10" width="9" height="9" fill="#000080" stroke="#0a0af0" stroke-width="1"/><rect x="1643.82" y="586.10" width="9" height="9" fill="#000080" stroke="#0a0af0" stroke-width="1"/><rect x="1679.24" y="600.10" width="9" height="9" fill="#000080" stroke="#0a0af0" stroke-width="1"/><rect x="1714.66" y="586.10" width="9" height="9" fill="#000080" stroke="#0a0af0" stroke-width="1"/><rect x="1750.08" y="600.10" width="9" height="9" fill="#000080" stroke="#0a0af0" stroke-width="1"/><rect x="1785.50" y="586.10" width="9" height="9" fill="#000080" stroke="#0a0af0" stroke-width="1"/><rect x="1820.92" y="600.10" width="9" height="9" fill="#000080" stroke="#0a0af0" stroke-width="1"/><rect x="1856.34" y="586.10" width="9" height="9" fill="#000080" stroke="#0a0af0" stroke-width="1"/><rect x="1081.5" y="613.7" width="786.5" height="26" fill="#ccccfc"/><rect x="1081.5" y="619" width="786.5" height="1" fill="#6e6ef8"/><rect x="1081.5" y="633" width="786.5" height="1" fill="#6e6ef8"/><line x1="1081.5" y1="618.7" x2="1868" y2="618.7" stroke="#1010f0" stroke-width="2"/><rect x="1077.10" y="614.20" width="9" height="9" fill="#000080" stroke="#0a0af0" stroke-width="1"/><rect x="1112.52" y="614.20" width="9" height="9" fill="#000080" stroke="#0a0af0" stroke-width="1"/><rect x="1147.94" y="614.20" width="9" height="9" fill="#000080" stroke="#0a0af0" stroke-width="1"/><rect x="1183.36" y="614.20" width="9" height="9" fill="#000080" stroke="#0a0af0" stroke-width="1"/><rect x="1218.78" y="614.20" width="9" height="9" fill="#000080" stroke="#0a0af0" stroke-width="1"/><rect x="1254.20" y="614.20" width="9" height="9" fill="#000080" stroke="#0a0af0" stroke-width="1"/><rect x="1289.62" y="614.20" width="9" height="9" fill="#000080" stroke="#0a0af0" stroke-width="1"/><rect x="1325.04" y="614.20" width="9" height="9" fill="#000080" stroke="#0a0af0" stroke-width="1"/><rect x="1360.46" y="614.20" width="9" height="9" fill="#000080" stroke="#0a0af0" stroke-width="1"/><rect x="1395.88" y="614.20" width="9" height="9" fill="#000080" stroke="#0a0af0" stroke-width="1"/><rect x="1431.30" y="614.20" width="9" height="9" fill="#000080" stroke="#0a0af0" stroke-width="1"/><rect x="1466.72" y="614.20" width="9" height="9" fill="#000080" stroke="#0a0af0" stroke-width="1"/><rect x="1502.14" y="614.20" width="9" height="9" fill="#000080" stroke="#0a0af0" stroke-width="1"/><rect x="1537.56" y="614.20" width="9" height="9" fill="#000080" stroke="#0a0af0" stroke-width="1"/><rect x="1572.98" y="614.20" width="9" height="9" fill="#000080" stroke="#0a0af0" stroke-width="1"/><rect x="1608.40" y="614.20" width="9" height="9" fill="#000080" stroke="#0a0af0" stroke-width="1"/><rect x="1643.82" y="614.20" width="9" height="9" fill="#000080" stroke="#0a0af0" stroke-width="1"/><rect x="1679.24" y="614.20" width="9" height="9" fill="#000080" stroke="#0a0af0" stroke-width="1"/><rect x="1714.66" y="614.20" width="9" height="9" fill="#000080" stroke="#0a0af0" stroke-width="1"/><rect x="1750.08" y="614.20" width="9" height="9" fill="#000080" stroke="#0a0af0" stroke-width="1"/><rect x="1785.50" y="614.20" width="9" height="9" fill="#000080" stroke="#0a0af0" stroke-width="1"/><rect x="1081.5" y="641.8" width="786.5" height="26" fill="#b4b4fa"/><rect x="1081.5" y="647" width="786.5" height="1" fill="#6e6ef8"/><rect x="1081.5" y="661" width="786.5" height="1" fill="#6e6ef8"/><line x1="1081.5" y1="660.8" x2="1868" y2="660.8" stroke="#1010f0" stroke-width="2"/><rect x="1077.10" y="656.30" width="9" height="9" fill="#000080" stroke="#0a0af0" stroke-width="1"/><rect x="1112.52" y="656.30" width="9" height="9" fill="#000080" stroke="#0a0af0" stroke-width="1"/><rect x="1147.94" y="656.30" width="9" height="9" fill="#000080" stroke="#0a0af0" stroke-width="1"/><rect x="1183.36" y="656.30" width="9" height="9" fill="#000080" stroke="#0a0af0" stroke-width="1"/><rect x="1218.78" y="656.30" width="9" height="9" fill="#000080" stroke="#0a0af0" stroke-width="1"/><rect x="1254.20" y="656.30" width="9" height="9" fill="#000080" stroke="#0a0af0" stroke-width="1"/><rect x="1289.62" y="656.30" width="9" height="9" fill="#000080" stroke="#0a0af0" stroke-width="1"/><rect x="1325.04" y="656.30" width="9" height="9" fill="#000080" stroke="#0a0af0" stroke-width="1"/><rect x="1360.46" y="656.30" width="9" height="9" fill="#000080" stroke="#0a0af0" stroke-width="1"/><rect x="1395.88" y="656.30" width="9" height="9" fill="#000080" stroke="#0a0af0" stroke-width="1"/><rect x="1431.30" y="656.30" width="9" height="9" fill="#000080" stroke="#0a0af0" stroke-width="1"/><rect x="1466.72" y="656.30" width="9" height="9" fill="#000080" stroke="#0a0af0" stroke-width="1"/><rect x="1502.14" y="656.30" width="9" height="9" fill="#000080" stroke="#0a0af0" stroke-width="1"/><rect x="1537.56" y="656.30" width="9" height="9" fill="#000080" stroke="#0a0af0" stroke-width="1"/><rect x="1572.98" y="656.30" width="9" height="9" fill="#000080" stroke="#0a0af0" stroke-width="1"/><rect x="1608.40" y="656.30" width="9" height="9" fill="#000080" stroke="#0a0af0" stroke-width="1"/><rect x="1643.82" y="656.30" width="9" height="9" fill="#000080" stroke="#0a0af0" stroke-width="1"/><rect x="1679.24" y="656.30" width="9" height="9" fill="#000080" stroke="#0a0af0" stroke-width="1"/><rect x="1714.66" y="656.30" width="9" height="9" fill="#000080" stroke="#0a0af0" stroke-width="1"/><rect x="1750.08" y="656.30" width="9" height="9" fill="#000080" stroke="#0a0af0" stroke-width="1"/><rect x="1785.50" y="656.30" width="9" height="9" fill="#000080" stroke="#0a0af0" stroke-width="1"/><rect x="1081.5" y="669.9" width="786.5" height="26" fill="#ccccfc"/><rect x="1081.5" y="675" width="786.5" height="1" fill="#6e6ef8"/><rect x="1081.5" y="689" width="786.5" height="1" fill="#6e6ef8"/><line x1="1081.5" y1="674.9" x2="1868" y2="674.9" stroke="#1010f0" stroke-width="2"/><rect x="1077.10" y="670.40" width="9" height="9" fill="#000080" stroke="#0a0af0" stroke-width="1"/><rect x="1112.52" y="670.40" width="9" height="9" fill="#000080" stroke="#0a0af0" stroke-width="1"/><rect x="1147.94" y="670.40" width="9" height="9" fill="#000080" stroke="#0a0af0" stroke-width="1"/><rect x="1183.36" y="670.40" width="9" height="9" fill="#000080" stroke="#0a0af0" stroke-width="1"/><rect x="1218.78" y="670.40" width="9" height="9" fill="#000080" stroke="#0a0af0" stroke-width="1"/><rect x="1254.20" y="670.40" width="9" height="9" fill="#000080" stroke="#0a0af0" stroke-width="1"/><rect x="1289.62" y="670.40" width="9" height="9" fill="#000080" stroke="#0a0af0" stroke-width="1"/><rect x="1325.04" y="670.40" width="9" height="9" fill="#000080" stroke="#0a0af0" stroke-width="1"/><rect x="1360.46" y="670.40" width="9" height="9" fill="#000080" stroke="#0a0af0" stroke-width="1"/><rect x="1395.88" y="670.40" width="9" height="9" fill="#000080" stroke="#0a0af0" stroke-width="1"/><rect x="1431.30" y="670.40" width="9" height="9" fill="#000080" stroke="#0a0af0" stroke-width="1"/><rect x="1466.72" y="670.40" width="9" height="9" fill="#000080" stroke="#0a0af0" stroke-width="1"/><rect x="1502.14" y="670.40" width="9" height="9" fill="#000080" stroke="#0a0af0" stroke-width="1"/><rect x="1537.56" y="670.40" width="9" height="9" fill="#000080" stroke="#0a0af0" stroke-width="1"/><rect x="1572.98" y="670.40" width="9" height="9" fill="#000080" stroke="#0a0af0" stroke-width="1"/><rect x="1608.40" y="670.40" width="9" height="9" fill="#000080" stroke="#0a0af0" stroke-width="1"/><rect x="1643.82" y="670.40" width="9" height="9" fill="#000080" stroke="#0a0af0" stroke-width="1"/><rect x="1679.24" y="670.40" width="9" height="9" fill="#000080" stroke="#0a0af0" stroke-width="1"/><rect x="1714.66" y="670.40" width="9" height="9" fill="#000080" stroke="#0a0af0" stroke-width="1"/><rect x="1750.08" y="670.40" width="9" height="9" fill="#000080" stroke="#0a0af0" stroke-width="1"/><rect x="1785.50" y="670.40" width="9" height="9" fill="#000080" stroke="#0a0af0" stroke-width="1"/><rect x="1081.5" y="729.9" width="786.5" height="26" fill="#cce6cc"/><rect x="1081.5" y="735" width="786.5" height="1" fill="#5a5a5a"/><rect x="1081.5" y="749" width="786.5" height="1" fill="#5a5a5a"/><line x1="1081.5" y1="734.1999999999999" x2="1868" y2="734.1999999999999" stroke="#000" stroke-width="2.300"/><rect x="1077.10" y="730.50" width="9" height="9" fill="#000" stroke="#000" stroke-width="1"/><rect x="1081.5" y="758" width="786.5" height="26" fill="#b4dab4"/><rect x="1081.5" y="763" width="786.5" height="1" fill="#a060a0"/><rect x="1081.5" y="777" width="786.5" height="1" fill="#a060a0"/><line x1="1081.5" y1="762.3" x2="1868" y2="762.3" stroke="#800080" stroke-width="2.300"/><rect x="1077.10" y="758.60" width="9" height="9" fill="#500050" stroke="#800080" stroke-width="1"/><rect x="1081.5" y="786" width="786.5" height="26" fill="#cce6cc"/><rect x="1081.5" y="791" width="786.5" height="1" fill="#f0a448"/><rect x="1081.5" y="805" width="786.5" height="1" fill="#f0a448"/><line x1="1081.5" y1="804.5" x2="1868" y2="804.5" stroke="#ff8c00" stroke-width="2.300"/><rect x="1077.10" y="800.80" width="9" height="9" fill="#804000" stroke="#ff8c00" stroke-width="1"/><rect x="1081.5" y="814" width="786.5" height="26" fill="#b4dab4"/><rect x="1081.5" y="819" width="786.5" height="1" fill="#5f95c8"/><rect x="1081.5" y="833" width="786.5" height="1" fill="#5f95c8"/><line x1="1195" y1="818.6999999999999" x2="1868" y2="818.6999999999999" stroke="#3a7ab8" stroke-width="2.400"/><rect x="1077.10" y="814.60" width="9" height="9" fill="#244060" stroke="#3a7ab8" stroke-width="1"/><rect x="1190.50" y="814.60" width="9" height="9" fill="#244060" stroke="#3a7ab8" stroke-width="1"/><rect x="1861.50" y="814.60" width="9" height="9" fill="#244060" stroke="#3a7ab8" stroke-width="1"/></g><g clip-path="url(#c3b)"><text transform="translate(970.19,575.10) scale(0.8887,1)" font-size="11.8" fill="#2222dd" >TBC 3</text><text transform="translate(970.19,603.20) scale(0.8855,1)" font-size="11.8" fill="#2222dd" >TBC 4</text><text transform="translate(970.19,631.30) scale(0.8887,1)" font-size="11.8" fill="#2222dd" >TBC 5</text><text transform="translate(970.19,659.40) scale(0.8887,1)" font-size="11.8" fill="#2222dd" >TBC 6</text><text transform="translate(970.19,687.50) scale(0.8919,1)" font-size="11.8" fill="#2222dd" >TBC 7</text></g><text transform="translate(970.34,745.90) scale(1.0053,1)" font-size="11.8" fill="#000" >#Cab-B active</text><text x="970.34" y="774.00" font-size="11.8" fill="#800080" >#Cab B coupled</text><text transform="translate(970.18,802.00) scale(0.9439,1)" font-size="11.8" fill="#f08418" >TOPS Brake reset p/b</text><text transform="translate(969.48,830.00) scale(0.9715,1)" font-size="11.8" fill="#4a7ebb" >Lo Speed</text><rect x="1081" y="573" width="1.200" height="248" fill="#00e5ee"/><rect x="1889" y="659" width="15" height="56" fill="#cdcdcd"/><polyline points="1892.60,584.20 1896.00,580.80 1899.40,584.20" fill="none" stroke="#555" stroke-width="2.1"/><polyline points="1892.60,810.80 1896.00,814.20 1899.40,810.80" fill="none" stroke="#555" stroke-width="2.1"/><polyline points="1090.40,826.10 1087.00,829.50 1090.40,832.90" fill="none" stroke="#bdbdbd" stroke-width="2.1"/><polyline points="1877.00,826.10 1880.40,829.50 1877.00,832.90" fill="none" stroke="#bdbdbd" stroke-width="2.1"/></svg><div class="box" style="left:970px;top:843px;width:935px;height:189px;border:1px solid #828790;background:#f0f0f0"></div><svg class="abs" style="left:971px;top:844px" width="933" height="187" viewBox="971 844 933 187"><rect x="971" y="844" width="26" height="170" fill="#fff"/><rect x="997" y="844" width="890" height="27" fill="#c4ebb4"/><rect x="997" y="870" width="890" height="1" fill="#9cbc90"/><rect x="997" y="871" width="890" height="1" fill="#444"/><rect x="997" y="872" width="890" height="1" fill="#e4ece2"/><rect x="997" y="844" width="890" height="1" fill="#e4f6dc"/><rect x="1164" y="844" width="1" height="27" fill="#4a4a4a"/><rect x="1165" y="844" width="1" height="26" fill="#e8f8e0"/><rect x="1267" y="844" width="1" height="27" fill="#4a4a4a"/><rect x="1268" y="844" width="1" height="26" fill="#e8f8e0"/><rect x="1348" y="844" width="1" height="27" fill="#4a4a4a"/><rect x="1349" y="844" width="1" height="26" fill="#e8f8e0"/><rect x="1391" y="844" width="1" height="27" fill="#4a4a4a"/><rect x="1392" y="844" width="1" height="26" fill="#e8f8e0"/><rect x="1656" y="844" width="1" height="27" fill="#4a4a4a"/><rect x="1657" y="844" width="1" height="26" fill="#e8f8e0"/><text transform="translate(1045.04,863.75) scale(1.0492,1)" font-size="14.4" fill="#000" >Event time</text><text transform="translate(1202.59,863.75) scale(1.0755,1)" font-size="14.4" fill="#000" >Unit</text><text transform="translate(1296.81,863.75) scale(0.9551,1)" font-size="14.4" fill="#000" >Car</text><text transform="translate(1352.49,863.75) scale(1.0515,1)" font-size="14.4" fill="#000" >Code</text><text transform="translate(1485.51,863.75) scale(1.0728,1)" font-size="14.4" fill="#000" >Description</text><rect x="997" y="873" width="890" height="20" fill="#cce6cc"/><rect x="1164" y="873" width="1" height="20" fill="#d2dad2"/><rect x="1267" y="873" width="1" height="20" fill="#d2dad2"/><rect x="1348" y="873" width="1" height="20" fill="#d2dad2"/><rect x="1391" y="873" width="1" height="20" fill="#d2dad2"/><rect x="1656" y="873" width="1" height="20" fill="#d2dad2"/><text transform="translate(974.92,888.75) scale(1.0113,1)" font-size="14.4" fill="#000" >35</text><text transform="translate(1000.31,888.75) scale(1.0076,1)" font-size="14.4" fill="#000" >10/03/2026 13:08:05.979</text><text transform="translate(1167.23,888.75) scale(1.0729,1)" font-size="14.4" fill="#000" >Cab-A leading</text><text transform="translate(1270.11,888.75) scale(0.9936,1)" font-size="14.4" fill="#000" >Rack-B</text><rect x="1353" y="875" width="4" height="4" fill="rgb(177,189,181)"/><rect x="1353" y="879" width="4" height="4" fill="rgb(150,162,154)"/><rect x="1353" y="883" width="4" height="4" fill="rgb(151,163,155)"/><rect x="1353" y="887" width="4" height="4" fill="rgb(158,170,162)"/><rect x="1357" y="875" width="4" height="4" fill="rgb(189,201,193)"/><rect x="1357" y="879" width="4" height="4" fill="rgb(159,171,163)"/><rect x="1357" y="883" width="4" height="4" fill="rgb(187,199,191)"/><rect x="1357" y="887" width="4" height="4" fill="rgb(182,194,186)"/><rect x="1361" y="875" width="4" height="4" fill="rgb(205,217,209)"/><rect x="1361" y="879" width="4" height="4" fill="rgb(173,185,177)"/><rect x="1361" y="883" width="4" height="4" fill="rgb(143,155,147)"/><rect x="1361" y="887" width="4" height="4" fill="rgb(189,201,193)"/><rect x="1365" y="875" width="4" height="4" fill="rgb(192,204,196)"/><rect x="1365" y="879" width="4" height="4" fill="rgb(152,164,156)"/><rect x="1365" y="883" width="4" height="4" fill="rgb(172,184,176)"/><rect x="1365" y="887" width="4" height="4" fill="rgb(147,159,151)"/><text transform="translate(1395.26,888.75) scale(0.9012,1)" font-size="14.4" fill="#000" >EVENT_DVD_BIR_FB_B</text><text transform="translate(1659.80,888.75) scale(1.0379,1)" font-size="14.4" fill="#000" >Brakes applied</text><rect x="997" y="893" width="890" height="20" fill="#cce6cc"/><rect x="1164" y="893" width="1" height="20" fill="#d2dad2"/><rect x="1267" y="893" width="1" height="20" fill="#d2dad2"/><rect x="1348" y="893" width="1" height="20" fill="#d2dad2"/><rect x="1391" y="893" width="1" height="20" fill="#d2dad2"/><rect x="1656" y="893" width="1" height="20" fill="#d2dad2"/><text transform="translate(974.92,908.75) scale(1.0113,1)" font-size="14.4" fill="#000" >36</text><text transform="translate(1000.31,908.75) scale(1.0062,1)" font-size="14.4" fill="#000" >10/03/2026 13:08:06.414</text><text transform="translate(1167.23,908.75) scale(1.0729,1)" font-size="14.4" fill="#000" >Cab-A leading</text><text transform="translate(1270.11,908.75) scale(0.9936,1)" font-size="14.4" fill="#000" >Rack-B</text><rect x="1353" y="895" width="4" height="4" fill="rgb(182,194,186)"/><rect x="1353" y="899" width="4" height="4" fill="rgb(192,204,196)"/><rect x="1353" y="903" width="4" height="4" fill="rgb(202,214,206)"/><rect x="1353" y="907" width="4" height="4" fill="rgb(205,217,209)"/><rect x="1357" y="895" width="4" height="4" fill="rgb(183,195,187)"/><rect x="1357" y="899" width="4" height="4" fill="rgb(177,189,181)"/><rect x="1357" y="903" width="4" height="4" fill="rgb(146,158,150)"/><rect x="1357" y="907" width="4" height="4" fill="rgb(173,185,177)"/><rect x="1361" y="895" width="4" height="4" fill="rgb(164,176,168)"/><rect x="1361" y="899" width="4" height="4" fill="rgb(167,179,171)"/><rect x="1361" y="903" width="4" height="4" fill="rgb(198,210,202)"/><rect x="1361" y="907" width="4" height="4" fill="rgb(173,185,177)"/><rect x="1365" y="895" width="4" height="4" fill="rgb(155,167,159)"/><rect x="1365" y="899" width="4" height="4" fill="rgb(153,165,157)"/><rect x="1365" y="903" width="4" height="4" fill="rgb(179,191,183)"/><rect x="1365" y="907" width="4" height="4" fill="rgb(201,213,205)"/><text transform="translate(1395.26,908.75) scale(0.8999,1)" font-size="14.4" fill="#000" >EVENT_TOPS_HEALTH_CHECK_OK_B</text><rect x="997" y="913" width="890" height="20" fill="#cce6cc"/><rect x="1164" y="913" width="1" height="20" fill="#d2dad2"/><rect x="1267" y="913" width="1" height="20" fill="#d2dad2"/><rect x="1348" y="913" width="1" height="20" fill="#d2dad2"/><rect x="1391" y="913" width="1" height="20" fill="#d2dad2"/><rect x="1656" y="913" width="1" height="20" fill="#d2dad2"/><text transform="translate(974.91,928.75) scale(1.0212,1)" font-size="14.4" fill="#000" >37</text><text transform="translate(1000.31,928.75) scale(1.0071,1)" font-size="14.4" fill="#000" >10/03/2026 13:08:06.446</text><text transform="translate(1167.23,928.75) scale(1.0729,1)" font-size="14.4" fill="#000" >Cab-A leading</text><text transform="translate(1270.11,928.75) scale(0.9936,1)" font-size="14.4" fill="#000" >Rack-B</text><rect x="1353" y="915" width="4" height="4" fill="rgb(185,197,189)"/><rect x="1353" y="919" width="4" height="4" fill="rgb(181,193,185)"/><rect x="1353" y="923" width="4" height="4" fill="rgb(189,201,193)"/><rect x="1353" y="927" width="4" height="4" fill="rgb(193,205,197)"/><rect x="1357" y="915" width="4" height="4" fill="rgb(170,182,174)"/><rect x="1357" y="919" width="4" height="4" fill="rgb(148,160,152)"/><rect x="1357" y="923" width="4" height="4" fill="rgb(171,183,175)"/><rect x="1357" y="927" width="4" height="4" fill="rgb(160,172,164)"/><rect x="1361" y="915" width="4" height="4" fill="rgb(189,201,193)"/><rect x="1361" y="919" width="4" height="4" fill="rgb(151,163,155)"/><rect x="1361" y="923" width="4" height="4" fill="rgb(184,196,188)"/><rect x="1361" y="927" width="4" height="4" fill="rgb(176,188,180)"/><rect x="1365" y="915" width="4" height="4" fill="rgb(165,177,169)"/><rect x="1365" y="919" width="4" height="4" fill="rgb(169,181,173)"/><rect x="1365" y="923" width="4" height="4" fill="rgb(178,190,182)"/><rect x="1365" y="927" width="4" height="4" fill="rgb(187,199,191)"/><text transform="translate(1395.24,928.75) scale(0.9178,1)" font-size="14.4" fill="#000" >EVENT_DVD_IDLE_B</text><rect x="997" y="933" width="890" height="20" fill="#cce6cc"/><rect x="1164" y="933" width="1" height="20" fill="#d2dad2"/><rect x="1267" y="933" width="1" height="20" fill="#d2dad2"/><rect x="1348" y="933" width="1" height="20" fill="#d2dad2"/><rect x="1391" y="933" width="1" height="20" fill="#d2dad2"/><rect x="1656" y="933" width="1" height="20" fill="#d2dad2"/><text transform="translate(974.92,948.75) scale(1.0113,1)" font-size="14.4" fill="#000" >38</text><text transform="translate(1000.31,948.75) scale(1.0071,1)" font-size="14.4" fill="#000" >10/03/2026 13:08:06.778</text><text transform="translate(1167.23,948.75) scale(1.0729,1)" font-size="14.4" fill="#000" >Cab-A leading</text><text transform="translate(1270.11,948.75) scale(0.9936,1)" font-size="14.4" fill="#000" >Rack-B</text><rect x="1353" y="935" width="4" height="4" fill="rgb(182,194,186)"/><rect x="1353" y="939" width="4" height="4" fill="rgb(190,202,194)"/><rect x="1353" y="943" width="4" height="4" fill="rgb(146,158,150)"/><rect x="1353" y="947" width="4" height="4" fill="rgb(171,183,175)"/><rect x="1357" y="935" width="4" height="4" fill="rgb(180,192,184)"/><rect x="1357" y="939" width="4" height="4" fill="rgb(179,191,183)"/><rect x="1357" y="943" width="4" height="4" fill="rgb(159,171,163)"/><rect x="1357" y="947" width="4" height="4" fill="rgb(181,193,185)"/><rect x="1361" y="935" width="4" height="4" fill="rgb(172,184,176)"/><rect x="1361" y="939" width="4" height="4" fill="rgb(190,202,194)"/><rect x="1361" y="943" width="4" height="4" fill="rgb(156,168,160)"/><rect x="1361" y="947" width="4" height="4" fill="rgb(147,159,151)"/><rect x="1365" y="935" width="4" height="4" fill="rgb(151,163,155)"/><rect x="1365" y="939" width="4" height="4" fill="rgb(193,205,197)"/><rect x="1365" y="943" width="4" height="4" fill="rgb(188,200,192)"/><rect x="1365" y="947" width="4" height="4" fill="rgb(185,197,189)"/><text transform="translate(1395.26,948.75) scale(0.9012,1)" font-size="14.4" fill="#000" >EVENT_DVD_BIR_FB_B</text><text transform="translate(1659.80,948.75) scale(1.0379,1)" font-size="14.4" fill="#000" >Brakes applied</text><rect x="997" y="953" width="890" height="20" fill="#fff"/><rect x="1164" y="953" width="1" height="20" fill="#e4e4e4"/><rect x="1267" y="953" width="1" height="20" fill="#e4e4e4"/><rect x="1348" y="953" width="1" height="20" fill="#e4e4e4"/><rect x="1391" y="953" width="1" height="20" fill="#e4e4e4"/><rect x="1656" y="953" width="1" height="20" fill="#e4e4e4"/><text transform="translate(974.91,968.75) scale(1.0163,1)" font-size="14.4" fill="#000" >39</text><text transform="translate(1000.31,968.75) scale(1.0071,1)" font-size="14.4" fill="#000" >10/03/2026 13:08:09.556</text><text transform="translate(1168.05,968.75) scale(1.0862,1)" font-size="14.4" fill="#000" >-simulator-</text><text transform="translate(1271.05,968.75) scale(1.0862,1)" font-size="14.4" fill="#000" >-simulator-</text><text transform="translate(1395.62,968.75) scale(1.0470,1)" font-size="14.4" fill="#000" >Stop</text><rect x="997" y="973" width="890" height="20" fill="#cce6cc"/><rect x="1164" y="973" width="1" height="20" fill="#d2dad2"/><rect x="1267" y="973" width="1" height="20" fill="#d2dad2"/><rect x="1348" y="973" width="1" height="20" fill="#d2dad2"/><rect x="1391" y="973" width="1" height="20" fill="#d2dad2"/><rect x="1656" y="973" width="1" height="20" fill="#d2dad2"/><text transform="translate(975.22,988.75) scale(0.9874,1)" font-size="14.4" fill="#000" >40</text><text transform="translate(1000.31,988.75) scale(1.0080,1)" font-size="14.4" fill="#000" >10/03/2026 13:21:37.387</text><text transform="translate(1167.23,988.75) scale(1.0729,1)" font-size="14.4" fill="#000" >Cab-A leading</text><text transform="translate(1270.11,988.75) scale(0.9936,1)" font-size="14.4" fill="#000" >Rack-B</text><rect x="1353" y="975" width="4" height="4" fill="rgb(171,183,175)"/><rect x="1353" y="979" width="4" height="4" fill="rgb(191,203,195)"/><rect x="1353" y="983" width="4" height="4" fill="rgb(184,196,188)"/><rect x="1353" y="987" width="4" height="4" fill="rgb(206,218,210)"/><rect x="1357" y="975" width="4" height="4" fill="rgb(164,176,168)"/><rect x="1357" y="979" width="4" height="4" fill="rgb(189,201,193)"/><rect x="1357" y="983" width="4" height="4" fill="rgb(143,155,147)"/><rect x="1357" y="987" width="4" height="4" fill="rgb(202,214,206)"/><rect x="1361" y="975" width="4" height="4" fill="rgb(154,166,158)"/><rect x="1361" y="979" width="4" height="4" fill="rgb(171,183,175)"/><rect x="1361" y="983" width="4" height="4" fill="rgb(201,213,205)"/><rect x="1361" y="987" width="4" height="4" fill="rgb(192,204,196)"/><rect x="1365" y="975" width="4" height="4" fill="rgb(151,163,155)"/><rect x="1365" y="979" width="4" height="4" fill="rgb(185,197,189)"/><rect x="1365" y="983" width="4" height="4" fill="rgb(148,160,152)"/><rect x="1365" y="987" width="4" height="4" fill="rgb(145,157,149)"/><text transform="translate(1395.23,988.75) scale(0.9248,1)" font-size="14.4" fill="#000" >EVENT_SERVER_COMMS_DOWN</text><rect x="997" y="993" width="890" height="20" fill="#cce6cc"/><rect x="1164" y="993" width="1" height="20" fill="#d2dad2"/><rect x="1267" y="993" width="1" height="20" fill="#d2dad2"/><rect x="1348" y="993" width="1" height="20" fill="#d2dad2"/><rect x="1391" y="993" width="1" height="20" fill="#d2dad2"/><rect x="1656" y="993" width="1" height="20" fill="#d2dad2"/><text x="975.21" y="1008.75" font-size="14.4" fill="#000" >41</text><text transform="translate(1000.31,1008.75) scale(1.0076,1)" font-size="14.4" fill="#000" >10/03/2026 13:40:52.441</text><text transform="translate(1167.23,1008.75) scale(1.0729,1)" font-size="14.4" fill="#000" >Cab-A leading</text><text transform="translate(1270.11,1008.75) scale(0.9936,1)" font-size="14.4" fill="#000" >Rack-B</text><rect x="1353" y="995" width="4" height="4" fill="rgb(166,178,170)"/><rect x="1353" y="999" width="4" height="4" fill="rgb(152,164,156)"/><rect x="1353" y="1003" width="4" height="4" fill="rgb(166,178,170)"/><rect x="1353" y="1007" width="4" height="4" fill="rgb(186,198,190)"/><rect x="1357" y="995" width="4" height="4" fill="rgb(159,171,163)"/><rect x="1357" y="999" width="4" height="4" fill="rgb(188,200,192)"/><rect x="1357" y="1003" width="4" height="4" fill="rgb(142,154,146)"/><rect x="1357" y="1007" width="4" height="4" fill="rgb(184,196,188)"/><rect x="1361" y="995" width="4" height="4" fill="rgb(143,155,147)"/><rect x="1361" y="999" width="4" height="4" fill="rgb(151,163,155)"/><rect x="1361" y="1003" width="4" height="4" fill="rgb(188,200,192)"/><rect x="1361" y="1007" width="4" height="4" fill="rgb(158,170,162)"/><rect x="1365" y="995" width="4" height="4" fill="rgb(181,193,185)"/><rect x="1365" y="999" width="4" height="4" fill="rgb(149,161,153)"/><rect x="1365" y="1003" width="4" height="4" fill="rgb(144,156,148)"/><rect x="1365" y="1007" width="4" height="4" fill="rgb(160,172,164)"/><text transform="translate(1395.26,1008.75) scale(0.9012,1)" font-size="14.4" fill="#000" >EVENT_DVD_BIR_FB_B</text><text transform="translate(1659.80,1008.75) scale(1.0379,1)" font-size="14.4" fill="#000" >Brakes applied</text><rect x="997" y="893" width="890" height="1" fill="#d2dad2"/><rect x="997" y="913" width="890" height="1" fill="#d2dad2"/><rect x="997" y="933" width="890" height="1" fill="#d2dad2"/><rect x="997" y="953" width="890" height="1" fill="#e4e4e4"/><rect x="997" y="973" width="890" height="1" fill="#e4e4e4"/><rect x="997" y="993" width="890" height="1" fill="#d2dad2"/><rect x="1887" y="844" width="1" height="170" fill="#fff"/><rect x="997" y="1013.500" width="891" height="1.500" fill="#fff"/><rect x="1888" y="974" width="15" height="22.500" fill="#cdcdcd"/><polyline points="1892.10,854.70 1895.50,851.30 1898.90,854.70" fill="none" stroke="#555" stroke-width="2.1"/><polyline points="1892.10,1004.30 1895.50,1007.70 1898.90,1004.30" fill="none" stroke="#555" stroke-width="2.1"/><rect x="988" y="1015.500" width="126" height="14" fill="#cdcdcd"/><polyline points="980.40,1019.10 977.00,1022.50 980.40,1025.90" fill="none" stroke="#555" stroke-width="2.1"/><polyline points="1877.00,1019.10 1880.40,1022.50 1877.00,1025.90" fill="none" stroke="#555" stroke-width="2.1"/></svg><div class="abs" style="left:961px;top:0;width:1px;height:1040px;background:#505050"></div><div class="abs" style="left:962px;top:1px;width:18px;height:1038px;background:linear-gradient(90deg,rgba(0,0,0,0.19),rgba(0,0,0,0.12) 22%,rgba(0,0,0,0.05) 50%,rgba(0,0,0,0.015) 75%,rgba(0,0,0,0))"></div><div class="abs" style="left:1919px;top:1px;width:1px;height:1038px;background:#fafafa"></div><div class="abs" style="left:962px;top:1038px;width:1958px;height:1px;background:#fafafa"></div><div class="abs" style="left:1920px;top:0;width:1px;height:1040px;background:#000"></div></div><div class="abs" style="left:0;top:1039px;width:1921px;height:1px;background:#000"></div><div class="abs" style="left:0;top:0;width:1921px;height:1px;background:#000"></div><div class="abs" style="left:0;top:0;width:1px;height:1040px;background:#000"></div></body></html>
